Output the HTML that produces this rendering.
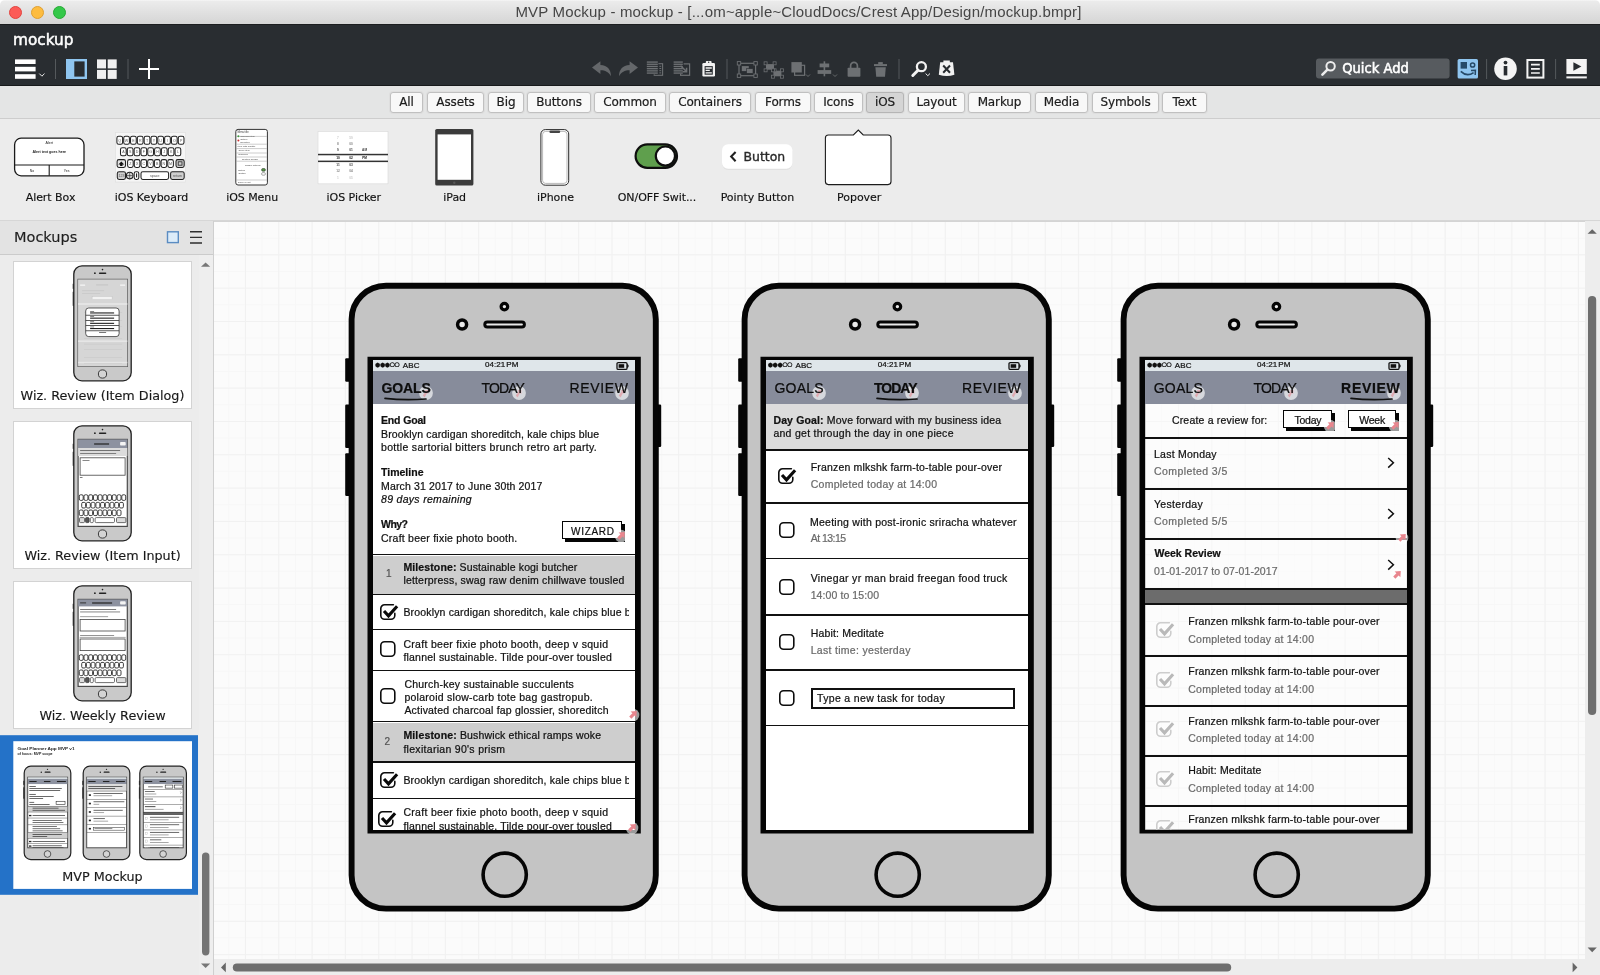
<!DOCTYPE html>
<html><head><meta charset="utf-8"><title>MVP Mockup - mockup</title>
<style>
*{box-sizing:border-box;margin:0;padding:0}
html,body{width:1600px;height:975px;overflow:hidden;background:#ececec;font-family:"DejaVu Sans","Liberation Sans",sans-serif;color:#222}
.abs{position:absolute}
#titlebar,#dark,#cats,#lib,#left,#canvas{will-change:transform}
.t{position:absolute;white-space:nowrap;font-family:"Liberation Sans",sans-serif;color:#111;-webkit-text-stroke:.22px currentColor}
.ar{font-family:"Liberation Sans",sans-serif}
#tbg{position:absolute;left:0;top:0;width:1600px;height:10px;background:#fff}
#titlebar{position:absolute;left:0;top:0;width:1600px;height:24px;background:linear-gradient(#f6f6f6 0,#ebebeb 1.5px,#d5d5d5 100%);border-radius:5px 5px 0 0}
#titlebar .tt{position:absolute;left:0;width:1597px;top:3px;text-align:center;font-family:"Liberation Sans",sans-serif;font-size:15px;line-height:18px;color:#454545;letter-spacing:.175px}
.tl{position:absolute;top:5.5px;width:13px;height:13px;border-radius:50%}
#dark{position:absolute;left:0;top:24px;width:1600px;height:62px;background:#292d31;box-shadow:inset 0 1px 0 #1c1e20,inset 0 -1px 0 #17191b}
#dark .name{position:absolute;left:13px;top:6.5px;color:#fff;font-size:15.3px;line-height:19px;-webkit-text-stroke:.5px #fff}
#cats{position:absolute;left:0;top:86px;width:1600px;height:33px;background:#e4e5e5;border-bottom:1px solid #cdcdcd}
.cb{position:absolute;top:6px;height:21px;border:1px solid #c0c0c0;border-radius:3px;background:#f8f8f8;font-size:12px;line-height:19px;text-align:center;color:#1c1c1c;box-shadow:0 0 0 1px #dedede;letter-spacing:-.12px;-webkit-text-stroke:.2px #1c1c1c}
.cb.sel{background:#d5d5d5;border-color:#b5b5b5}
#lib{position:absolute;left:0;top:119px;width:1600px;height:102px;background:#ececec;border-bottom:1px solid #d6d6d6}
.ll{position:absolute;top:72.4px;font-size:11px;line-height:14px;color:#111;-webkit-text-stroke:.15px #111;letter-spacing:-.05px;text-align:center;width:120px;white-space:nowrap}
#left{position:absolute;left:0;top:221px;width:214px;height:754px;background:#ececec;border-right:1px solid #cfcfcf}
#lhead{position:absolute;left:0;top:0;width:213px;height:34px;background:#e3e3e3;border-bottom:1px solid #cbcbcb}
#lhead .lt{position:absolute;left:14px;top:6.5px;font-size:14.5px;line-height:19px;color:#1e1e1e;-webkit-text-stroke:.15px #1e1e1e}
.thumb{position:absolute;left:13px;width:179px;height:148px;background:#fff;border:1px solid #d3d3d3}
.lab{position:absolute;width:200px;text-align:center;font-size:12.75px;line-height:16px;color:#1a1a1a;-webkit-text-stroke:.15px #1a1a1a;white-space:nowrap}
#cbg{position:absolute;left:214px;top:221px;width:1371px;height:738px;background-color:#fbfbfb;
background-image:linear-gradient(#f1f1f1 1px,transparent 1px),linear-gradient(90deg,#f1f1f1 1px,transparent 1px),linear-gradient(#f7f7f7 1px,transparent 1px),linear-gradient(90deg,#f7f7f7 1px,transparent 1px);
background-size:33.33px 33.33px,33.33px 33.33px,16.665px 16.665px,16.665px 16.665px;background-position:-2.4px 0px;box-shadow:inset 0 1px 0 #d4d4d4}
#canvas{position:absolute;left:0;top:0;width:1600px;height:975px}
</style></head><body>
<div id="tbg"></div>
<div id="titlebar">
 <div class="tl" style="left:9px;background:#fc5b57;border:.5px solid #e2443f"></div>
 <div class="tl" style="left:31.3px;background:#fdbc40;border:.5px solid #e0a030"></div>
 <div class="tl" style="left:53.4px;background:#34c84a;border:.5px solid #27aa35"></div>
 <div class="tt">MVP Mockup - mockup - [...om~apple~CloudDocs/Crest App/Design/mockup.bmpr]</div>
</div>
<div id="dark"><div class="name">mockup</div>
<svg class="abs" style="left:0;top:0" width="1600" height="62" viewBox="0 24 1600 62"><rect x="15" y="59.4" width="20.6" height="4.6" fill="#fff"/><rect x="15" y="66.8" width="20.6" height="4.6" fill="#fff"/><rect x="15" y="74.2" width="20.6" height="4.6" fill="#fff"/><path d="M39.3 73.6 L41.9 76.2 L44.5 73.6" fill="none" stroke="#e8e8e8" stroke-width="1"/><rect x="55.0" y="59" width="1" height="20" fill="#55595c"/><rect x="127.5" y="59" width="1" height="20" fill="#55595c"/><rect x="726.5" y="59" width="1" height="20" fill="#55595c"/><rect x="898.5" y="59" width="1" height="20" fill="#55595c"/><rect x="1486.1" y="59" width="1" height="20" fill="#55595c"/><rect x="1555.1" y="59" width="1" height="20" fill="#55595c"/><rect x="66" y="59" width="21" height="20" fill="#8fc5ef"/><rect x="74.3" y="61.4" width="10.3" height="15.2" fill="#282c30"/><rect x="97.0" y="59.4" width="9" height="9" fill="#f0f0f0"/><rect x="107.7" y="59.4" width="9" height="9" fill="#f0f0f0"/><rect x="97.0" y="69.9" width="9" height="9" fill="#f0f0f0"/><rect x="107.7" y="69.9" width="9" height="9" fill="#f0f0f0"/><path d="M139 69 H159 M149 59 V79" stroke="#fff" stroke-width="2" fill="none"/><g transform="translate(0 .7)"><path d="M592 66.8 L600.4 60.6 L600.4 64.2 C607.5 64.4 611 69 611 75.6 C608.6 71.4 605.4 69.6 600.4 69.6 L600.4 73.2 Z" fill="#64676a"/><path d="M638 66.8 L629.6 60.6 L629.6 64.2 C622.5 64.4 619 69 619 75.6 C621.4 71.4 624.6 69.6 629.6 69.6 L629.6 73.2 Z" fill="#64676a"/><rect x="654.2" y="63" width="8.4" height="11.6" fill="none" stroke="#6d7073" stroke-width="1.1"/><path d="M659.4 65.6h1.8M659.4 67.8h1.8M659.4 70h1.8M659.4 72.2h1.8" stroke="#6d7073" stroke-width="1"/><rect x="646" y="60" width="12.4" height="13.6" fill="#282c30"/><rect x="646.8" y="60.7" width="11" height="1.35" fill="#6d7073"/><rect x="646.8" y="62.9" width="11" height="1.35" fill="#6d7073"/><rect x="646.8" y="65.1" width="11" height="1.35" fill="#6d7073"/><rect x="646.8" y="67.3" width="11" height="1.35" fill="#6d7073"/><rect x="646.8" y="69.5" width="11" height="1.35" fill="#6d7073"/><rect x="646.8" y="71.7" width="11" height="1.35" fill="#6d7073"/><rect x="680.6" y="63.2" width="9" height="11.4" fill="none" stroke="#6d7073" stroke-width="1.2"/><rect x="673" y="60" width="10.6" height="13" fill="#282c30"/><rect x="673.6" y="60.7" width="9.2" height="1.35" fill="#6d7073"/><rect x="673.6" y="62.9" width="9.2" height="1.35" fill="#6d7073"/><rect x="673.6" y="65.1" width="9.2" height="1.35" fill="#6d7073"/><rect x="673.6" y="67.3" width="9.2" height="1.35" fill="#6d7073"/><rect x="673.6" y="69.5" width="9.2" height="1.35" fill="#6d7073"/><rect x="673.6" y="71.7" width="9.2" height="1.35" fill="#6d7073"/><path d="M680.6 65 L686.2 70.6 M682.6 71 H686.6 V67" fill="none" stroke="#6d7073" stroke-width="1.5"/><rect x="702.4" y="62.4" width="12.6" height="13.4" rx="1.2" fill="#f2f2f2"/><rect x="705.8" y="60.4" width="5.8" height="3.4" rx=".9" fill="#f2f2f2"/><circle cx="708.7" cy="61.6" r=".7" fill="#282c30"/><rect x="704.6" y="65.4" width="8.2" height="8.6" fill="#282c30"/><path d="M705.6 67.3h6.2M705.6 69.7h4.2M705.6 72.1h6.2" stroke="#f2f2f2" stroke-width="1.3"/><g fill="none" stroke="#6d7073"><rect x="739" y="62.6" width="16.6" height="12.4" stroke-width="1.2"/><rect x="741.8" y="65.4" width="7" height="5" fill="#6d7073" stroke="none"/><rect x="746.6" y="68" width="6.4" height="4.6" fill="#6d7073" stroke="#282c30" stroke-width=".6"/></g><rect x="737.3" y="60.9" width="3.4" height="3.4" fill="#282c30" stroke="#6d7073" stroke-width=".9"/><rect x="753.9" y="60.9" width="3.4" height="3.4" fill="#282c30" stroke="#6d7073" stroke-width=".9"/><rect x="737.3" y="73.3" width="3.4" height="3.4" fill="#282c30" stroke="#6d7073" stroke-width=".9"/><rect x="753.9" y="73.3" width="3.4" height="3.4" fill="#282c30" stroke="#6d7073" stroke-width=".9"/><g fill="#6d7073"><rect x="766" y="63.4" width="8" height="5.6"/><rect x="773.4" y="70" width="8" height="5.6"/></g><rect x="764.1" y="61.1" width="3" height="3" fill="#282c30" stroke="#6d7073" stroke-width=".8"/><rect x="773.1" y="61.1" width="3" height="3" fill="#282c30" stroke="#6d7073" stroke-width=".8"/><rect x="764.1" y="68.1" width="3" height="3" fill="#282c30" stroke="#6d7073" stroke-width=".8"/><rect x="773.1" y="68.1" width="3" height="3" fill="#282c30" stroke="#6d7073" stroke-width=".8"/><rect x="771.5" y="68.1" width="3" height="3" fill="#282c30" stroke="#6d7073" stroke-width=".8"/><rect x="780.5" y="68.1" width="3" height="3" fill="#282c30" stroke="#6d7073" stroke-width=".8"/><rect x="771.5" y="74.5" width="3" height="3" fill="#282c30" stroke="#6d7073" stroke-width=".8"/><rect x="780.5" y="74.5" width="3" height="3" fill="#282c30" stroke="#6d7073" stroke-width=".8"/><rect x="794.6" y="64.6" width="10" height="10" fill="none" stroke="#6d7073" stroke-width="1.2"/><rect x="791.4" y="61.4" width="10.4" height="10.4" fill="#6d7073"/><path d="M806 73.8 L808 75.8 L810 73.8" fill="none" stroke="#6d7073" stroke-width=".9"/><g fill="#6d7073"><rect x="823.6" y="60.6" width="1.6" height="15"/><rect x="819.6" y="62.8" width="9.6" height="3.8"/><rect x="817.6" y="69.4" width="13.6" height="3.8"/></g><path d="M833 73.8 L835 75.8 L837 73.8" fill="none" stroke="#6d7073" stroke-width=".9"/><rect x="847.6" y="67" width="12.8" height="9" rx=".8" fill="#6d7073"/><path d="M850.6 67.4 V65 a3.4 3.4 0 0 1 6.8 0 V67.4" fill="none" stroke="#6d7073" stroke-width="1.7"/><path d="M875.4 66.6 H885.8 L885 76 H876.2 Z" fill="#6d7073"/><rect x="874" y="63.4" width="13" height="2" fill="#6d7073"/><rect x="878.2" y="61.4" width="4.6" height="2.4" fill="#6d7073"/><circle cx="921.4" cy="66" r="4.5" fill="none" stroke="#f2f2f2" stroke-width="2.3"/><path d="M918 69.6 L912.8 74.8" stroke="#f2f2f2" stroke-width="3" stroke-linecap="round"/><path d="M925.6 72.8 L927.8 75 L930 72.8" fill="none" stroke="#f2f2f2" stroke-width="1"/><path d="M940.2 61.6 H953 L954.4 74 Q947 76.4 938.8 74 Z" fill="#f2f2f2"/><rect x="943.4" y="59.8" width="6.4" height="3" fill="#f2f2f2"/><path d="M943.2 64.8 L950 72 M950 64.8 L943.2 72" stroke="#282c30" stroke-width="2"/></g><rect x="1316" y="58.4" width="133.6" height="20.2" rx="3" fill="#575b5f"/><circle cx="1330.6" cy="66.2" r="4.2" fill="none" stroke="#ededed" stroke-width="2"/><path d="M1327.4 69.6 L1322.4 74.6" stroke="#ededed" stroke-width="2.6" stroke-linecap="round"/><text x="1342.2" y="73" font-family="DejaVu Sans,Liberation Sans,sans-serif" font-size="13.6" fill="#fff" stroke="#fff" stroke-width=".55" textLength="66.6" lengthAdjust="spacingAndGlyphs">Quick Add</text><rect x="1457.6" y="59" width="20.4" height="19.6" rx="1.5" fill="#8fc5ef"/><rect x="1460.6" y="62" width="6.4" height="6.6" fill="#264a68"/><circle cx="1472.6" cy="65" r="2.1" fill="none" stroke="#264a68" stroke-width="1.5"/><path d="M1460.8 71.4 Q1467 77.4 1473.6 72.6" fill="none" stroke="#264a68" stroke-width="1.7"/><path d="M1471 70.6 L1475.4 70.4 L1475.2 75" fill="none" stroke="#264a68" stroke-width="1.5"/><circle cx="1505.5" cy="68.8" r="11.3" fill="#f4f4f4"/><circle cx="1505.5" cy="62.6" r="1.9" fill="#282c30"/><rect x="1503.7" y="66" width="3.6" height="9.4" fill="#282c30"/><rect x="1527.4" y="60" width="16" height="17.6" fill="none" stroke="#f4f4f4" stroke-width="2"/><path d="M1531 64.6h8.8M1531 68.8h8.8M1531 73h8.8" stroke="#f4f4f4" stroke-width="1.7"/><rect x="1566.4" y="59" width="20.4" height="15" fill="#f4f4f4"/><path d="M1573.4 62.2 L1581.4 66.5 L1573.4 70.8 Z" fill="#282c30"/><rect x="1566.4" y="76.4" width="20.4" height="2" fill="#f4f4f4"/></svg>

</div>
<div id="cats">
<div class="cb" style="left:390px;width:33px">All</div>
<div class="cb" style="left:427px;width:57px">Assets</div>
<div class="cb" style="left:488px;width:36px">Big</div>
<div class="cb" style="left:527px;width:64px">Buttons</div>
<div class="cb" style="left:594px;width:72px">Common</div>
<div class="cb" style="left:669px;width:82px">Containers</div>
<div class="cb" style="left:755px;width:56px">Forms</div>
<div class="cb" style="left:814px;width:49px">Icons</div>
<div class="cb sel" style="left:866px;width:38px">iOS</div>
<div class="cb" style="left:908px;width:57px">Layout</div>
<div class="cb" style="left:968px;width:63px">Markup</div>
<div class="cb" style="left:1035px;width:53px">Media</div>
<div class="cb" style="left:1092px;width:67px">Symbols</div>
<div class="cb" style="left:1162px;width:45px">Text</div>
</div>
<div id="lib">
<svg class="abs" style="left:0;top:0" width="1000" height="102" viewBox="0 119 1000 102" font-family="Liberation Sans,sans-serif"><rect x="14.6" y="138.2" width="69.4" height="37.6" rx="6.5" fill="#fff" stroke="#1a1a1a" stroke-width="1.3"/><path d="M14.6 165 H84 M49.2 165 V175.8" stroke="#1a1a1a" stroke-width="1.1" fill="none"/><text x="49.3" y="143.6" font-size="3.6" text-anchor="middle" fill="#222">Alert</text><text x="49.3" y="153.4" font-size="3.6" font-weight="bold" text-anchor="middle" fill="#222">Alert text goes here</text><text x="32" y="172" font-size="3.4" text-anchor="middle" fill="#222">No</text><text x="66.6" y="172" font-size="3.4" text-anchor="middle" fill="#222">Yes</text><rect x="115.6" y="132.6" width="70" height="49.4" fill="#f6f6f6" stroke="#dedede" stroke-width=".6"/><rect x="116.90" y="136.20" width="5.70" height="8.00" rx="1.8" fill="#fff" stroke="#222" stroke-width="1.05"/><text x="119.75" y="141.50" font-size="3.6" text-anchor="middle" fill="#555">Q</text><rect x="123.72" y="136.20" width="5.70" height="8.00" rx="1.8" fill="#fff" stroke="#222" stroke-width="1.05"/><text x="126.57" y="141.50" font-size="3.6" text-anchor="middle" fill="#555">W</text><rect x="130.54" y="136.20" width="5.70" height="8.00" rx="1.8" fill="#fff" stroke="#222" stroke-width="1.05"/><text x="133.39" y="141.50" font-size="3.6" text-anchor="middle" fill="#555">E</text><rect x="137.36" y="136.20" width="5.70" height="8.00" rx="1.8" fill="#fff" stroke="#222" stroke-width="1.05"/><text x="140.21" y="141.50" font-size="3.6" text-anchor="middle" fill="#555">R</text><rect x="144.18" y="136.20" width="5.70" height="8.00" rx="1.8" fill="#fff" stroke="#222" stroke-width="1.05"/><text x="147.03" y="141.50" font-size="3.6" text-anchor="middle" fill="#555">T</text><rect x="151.00" y="136.20" width="5.70" height="8.00" rx="1.8" fill="#fff" stroke="#222" stroke-width="1.05"/><text x="153.85" y="141.50" font-size="3.6" text-anchor="middle" fill="#555">Y</text><rect x="157.82" y="136.20" width="5.70" height="8.00" rx="1.8" fill="#fff" stroke="#222" stroke-width="1.05"/><text x="160.67" y="141.50" font-size="3.6" text-anchor="middle" fill="#555">U</text><rect x="164.64" y="136.20" width="5.70" height="8.00" rx="1.8" fill="#fff" stroke="#222" stroke-width="1.05"/><text x="167.49" y="141.50" font-size="3.6" text-anchor="middle" fill="#555">I</text><rect x="171.46" y="136.20" width="5.70" height="8.00" rx="1.8" fill="#fff" stroke="#222" stroke-width="1.05"/><text x="174.31" y="141.50" font-size="3.6" text-anchor="middle" fill="#555">O</text><rect x="178.28" y="136.20" width="5.70" height="8.00" rx="1.8" fill="#fff" stroke="#222" stroke-width="1.05"/><text x="181.13" y="141.50" font-size="3.6" text-anchor="middle" fill="#555">P</text><rect x="120.50" y="147.80" width="5.70" height="8.00" rx="1.8" fill="#fff" stroke="#222" stroke-width="1.05"/><text x="123.35" y="153.10" font-size="3.6" text-anchor="middle" fill="#555">A</text><rect x="127.32" y="147.80" width="5.70" height="8.00" rx="1.8" fill="#fff" stroke="#222" stroke-width="1.05"/><text x="130.17" y="153.10" font-size="3.6" text-anchor="middle" fill="#555">S</text><rect x="134.14" y="147.80" width="5.70" height="8.00" rx="1.8" fill="#fff" stroke="#222" stroke-width="1.05"/><text x="136.99" y="153.10" font-size="3.6" text-anchor="middle" fill="#555">D</text><rect x="140.96" y="147.80" width="5.70" height="8.00" rx="1.8" fill="#fff" stroke="#222" stroke-width="1.05"/><text x="143.81" y="153.10" font-size="3.6" text-anchor="middle" fill="#555">F</text><rect x="147.78" y="147.80" width="5.70" height="8.00" rx="1.8" fill="#fff" stroke="#222" stroke-width="1.05"/><text x="150.63" y="153.10" font-size="3.6" text-anchor="middle" fill="#555">G</text><rect x="154.60" y="147.80" width="5.70" height="8.00" rx="1.8" fill="#fff" stroke="#222" stroke-width="1.05"/><text x="157.45" y="153.10" font-size="3.6" text-anchor="middle" fill="#555">H</text><rect x="161.42" y="147.80" width="5.70" height="8.00" rx="1.8" fill="#fff" stroke="#222" stroke-width="1.05"/><text x="164.27" y="153.10" font-size="3.6" text-anchor="middle" fill="#555">J</text><rect x="168.24" y="147.80" width="5.70" height="8.00" rx="1.8" fill="#fff" stroke="#222" stroke-width="1.05"/><text x="171.09" y="153.10" font-size="3.6" text-anchor="middle" fill="#555">K</text><rect x="175.06" y="147.80" width="5.70" height="8.00" rx="1.8" fill="#fff" stroke="#222" stroke-width="1.05"/><text x="177.91" y="153.10" font-size="3.6" text-anchor="middle" fill="#555">L</text><rect x="117.10" y="159.60" width="8.40" height="7.80" rx="1.8" fill="#e4e4e4" stroke="#222" stroke-width="1.05"/><path d="M121.3 161.4 L124.2 164.4 H122.5 V166 H120.1 V164.4 H118.4 Z" fill="#111"/><rect x="127.60" y="159.60" width="5.60" height="7.80" rx="1.8" fill="#fff" stroke="#222" stroke-width="1.05"/><text x="130.40" y="164.80" font-size="3.6" text-anchor="middle" fill="#555">Z</text><rect x="134.30" y="159.60" width="5.60" height="7.80" rx="1.8" fill="#fff" stroke="#222" stroke-width="1.05"/><text x="137.10" y="164.80" font-size="3.6" text-anchor="middle" fill="#555">X</text><rect x="141.00" y="159.60" width="5.60" height="7.80" rx="1.8" fill="#fff" stroke="#222" stroke-width="1.05"/><text x="143.80" y="164.80" font-size="3.6" text-anchor="middle" fill="#555">C</text><rect x="147.70" y="159.60" width="5.60" height="7.80" rx="1.8" fill="#fff" stroke="#222" stroke-width="1.05"/><text x="150.50" y="164.80" font-size="3.6" text-anchor="middle" fill="#555">V</text><rect x="154.40" y="159.60" width="5.60" height="7.80" rx="1.8" fill="#fff" stroke="#222" stroke-width="1.05"/><text x="157.20" y="164.80" font-size="3.6" text-anchor="middle" fill="#555">B</text><rect x="161.10" y="159.60" width="5.60" height="7.80" rx="1.8" fill="#fff" stroke="#222" stroke-width="1.05"/><text x="163.90" y="164.80" font-size="3.6" text-anchor="middle" fill="#555">N</text><rect x="167.80" y="159.60" width="5.60" height="7.80" rx="1.8" fill="#fff" stroke="#222" stroke-width="1.05"/><text x="170.60" y="164.80" font-size="3.6" text-anchor="middle" fill="#555">M</text><rect x="176.00" y="159.60" width="8.20" height="7.80" rx="1.8" fill="#cfcfcf" stroke="#222" stroke-width="1.05"/><rect x="178.2" y="161.8" width="3.8" height="3.4" fill="none" stroke="#222" stroke-width=".8"/><rect x="117.30" y="171.80" width="8.20" height="7.60" rx="1.8" fill="#cfcfcf" stroke="#222" stroke-width="1.05"/><text x="121.40" y="176.90" font-size="3.6" text-anchor="middle" fill="#555">123</text><circle cx="129.7" cy="175.6" r="3.3" fill="#ddd" stroke="#222" stroke-width="1.1"/><path d="M126.8 175.6h5.8M129.7 172.6v6" stroke="#222" stroke-width=".6"/><rect x="134.20" y="171.80" width="4.60" height="7.60" rx="1.8" fill="#fff" stroke="#222" stroke-width="1.05"/><rect x="136" y="173.4" width="1.1" height="4" fill="#222"/><rect x="141.00" y="171.80" width="27.60" height="7.60" rx="1.8" fill="#fff" stroke="#222" stroke-width="1.05"/><text x="154.80" y="176.90" font-size="3.6" text-anchor="middle" fill="#555">space</text><rect x="170.60" y="171.80" width="13.60" height="7.60" rx="1.8" fill="#cfcfcf" stroke="#222" stroke-width="1.05"/><text x="177.40" y="176.90" font-size="3.6" text-anchor="middle" fill="#555">return</text><rect x="235.8" y="129.4" width="31.6" height="55.6" rx="2.2" fill="#fff" stroke="#333" stroke-width="1"/><text x="237.4" y="133.4" font-size="2.6" fill="#333">Menu title</text><path d="M236.4 136.4 H266.8" stroke="#9a9a9a" stroke-width=".5"/><path d="M236.4 144.2 H266.8" stroke="#9a9a9a" stroke-width=".5"/><path d="M236.4 148.6 H266.8" stroke="#9a9a9a" stroke-width=".5"/><path d="M236.4 153.0 H266.8" stroke="#9a9a9a" stroke-width=".5"/><path d="M236.4 157.0 H266.8" stroke="#9a9a9a" stroke-width=".5"/><path d="M236.4 161.2 H266.8" stroke="#9a9a9a" stroke-width=".5"/><path d="M236.4 180.0 H266.8" stroke="#9a9a9a" stroke-width=".5"/><circle cx="238.4" cy="136.2" r="1" fill="#3f9c3f"/><circle cx="238.4" cy="140.6" r="1" fill="#c33"/><text x="240.2" y="137.0" font-size="2.4" fill="#444">Checked item</text><text x="240.2" y="140.0" font-size="2.4" fill="#444">Option</text><text x="240.2" y="142.6" font-size="2.4" fill="#444">Selected</text><text x="237.6" y="146.8" font-size="2.4" fill="#444">Item with subtitle</text><text x="238.6" y="151.2" font-size="2.4" fill="#444">Open item</text><text x="238.6" y="155.4" font-size="2.4" fill="#444">Disabled</text><text x="242.0" y="159.6" font-size="2.4" fill="#444">Section header</text><text x="245.0" y="166.0" font-size="2.4" fill="#444">Toggle options</text><text x="238.0" y="170.6" font-size="2.4" fill="#444">Option</text><text x="238.6" y="174.4" font-size="2.4" fill="#444">Switch</text><text x="238.0" y="183.4" font-size="2.4" fill="#444">Done or not</text><rect x="261.6" y="168.6" width="3.8" height="2.6" rx="1.2" fill="#5a9c4a" stroke="#222" stroke-width=".5"/><rect x="261.6" y="172.6" width="3.8" height="2.6" rx="1.2" fill="#fff" stroke="#555" stroke-width=".5"/><rect x="318" y="131.4" width="70" height="52.4" fill="#fff" stroke="#dcdcdc" stroke-width=".7"/><rect x="318" y="153.8" width="70" height="1.5" fill="#333"/><rect x="318" y="160.6" width="70" height="1.5" fill="#333"/><text x="338" y="138.6" font-size="3.2" text-anchor="middle" fill="#ccc" font-weight="bold">7</text><text x="351" y="138.6" font-size="3.2" text-anchor="middle" fill="#ccc" font-weight="bold">59</text><text x="364.6" y="138.6" font-size="3.2" text-anchor="middle" fill="#ccc" font-weight="bold"></text><text x="338" y="144.6" font-size="3.2" text-anchor="middle" fill="#888" font-weight="bold">8</text><text x="351" y="144.6" font-size="3.2" text-anchor="middle" fill="#888" font-weight="bold">00</text><text x="364.6" y="144.6" font-size="3.2" text-anchor="middle" fill="#888" font-weight="bold"></text><text x="338" y="151.0" font-size="3.2" text-anchor="middle" fill="#444" font-weight="bold">9</text><text x="351" y="151.0" font-size="3.2" text-anchor="middle" fill="#444" font-weight="bold">01</text><text x="364.6" y="151.0" font-size="3.2" text-anchor="middle" fill="#444" font-weight="bold">AM</text><text x="338" y="158.8" font-size="3.2" text-anchor="middle" fill="#111" font-weight="bold">10</text><text x="351" y="158.8" font-size="3.2" text-anchor="middle" fill="#111" font-weight="bold">02</text><text x="364.6" y="158.8" font-size="3.2" text-anchor="middle" fill="#111" font-weight="bold">PM</text><text x="338" y="165.8" font-size="3.2" text-anchor="middle" fill="#444" font-weight="bold">11</text><text x="351" y="165.8" font-size="3.2" text-anchor="middle" fill="#444" font-weight="bold">03</text><text x="364.6" y="165.8" font-size="3.2" text-anchor="middle" fill="#444" font-weight="bold"></text><text x="338" y="172.4" font-size="3.2" text-anchor="middle" fill="#888" font-weight="bold">12</text><text x="351" y="172.4" font-size="3.2" text-anchor="middle" fill="#888" font-weight="bold">04</text><text x="364.6" y="172.4" font-size="3.2" text-anchor="middle" fill="#888" font-weight="bold"></text><text x="338" y="178.6" font-size="3.2" text-anchor="middle" fill="#ccc" font-weight="bold">1</text><text x="351" y="178.6" font-size="3.2" text-anchor="middle" fill="#ccc" font-weight="bold">05</text><text x="364.6" y="178.6" font-size="3.2" text-anchor="middle" fill="#ccc" font-weight="bold"></text><rect x="435.2" y="129" width="38.2" height="56.6" rx="1.6" fill="#3b3b3b"/><rect x="437.6" y="134.4" width="33.4" height="45.4" fill="#fff"/><circle cx="454.3" cy="182.8" r="1.2" fill="#555"/><rect x="540.9" y="129.6" width="27.8" height="55.6" rx="4.4" fill="#fff" stroke="#2a2a2a" stroke-width="1"/><rect x="542.6" y="131.4" width="24.4" height="52" rx="3" fill="#fff" stroke="#8a8a8a" stroke-width=".6"/><rect x="549.4" y="130.6" width="10.8" height="2.4" rx="1.2" fill="#444"/><rect x="635.6" y="144.4" width="41.4" height="23.4" rx="11.7" fill="#5f9f4d" stroke="#0e0e0e" stroke-width="2.2"/><circle cx="665.4" cy="156.1" r="9.6" fill="#fff" stroke="#0e0e0e" stroke-width="2.2"/><rect x="722.2" y="145" width="70" height="25" rx="6" fill="#d9d9d9" opacity=".55"/><rect x="722" y="144.2" width="70.4" height="24.6" rx="6" fill="#fff"/><path d="M735.6 152 L731.2 156.6 L735.6 161.2" fill="none" stroke="#222" stroke-width="2.1"/><text x="743.6" y="161.2" font-family="DejaVu Sans,Liberation Sans,sans-serif" font-size="12" fill="#2a2a2a" stroke="#2a2a2a" stroke-width=".35" textLength="41.6" lengthAdjust="spacingAndGlyphs">Button</text><path d="M828.4 135 H853.4 L858.3 130 L863.2 135 H888 Q891 135 891 138 V181.6 Q891 184.6 888 184.6 H828.4 Q825.4 184.6 825.4 181.6 V138 Q825.4 135 828.4 135 Z" fill="#fff" stroke="#1c1c1c" stroke-width="1.1"/></svg>
<div class="ll" style="left:-9.5px">Alert Box</div>
<div class="ll" style="left:91.5px">iOS Keyboard</div>
<div class="ll" style="left:192.2px">iOS Menu</div>
<div class="ll" style="left:293.8px">iOS Picker</div>
<div class="ll" style="left:394.7px">iPad</div>
<div class="ll" style="left:495.5px">iPhone</div>
<div class="ll" style="left:597.0px">ON/OFF Swit...</div>
<div class="ll" style="left:697.4px">Pointy Button</div>
<div class="ll" style="left:799.2px">Popover</div>

</div>
<div id="left"><div id="lhead"><div class="lt">Mockups</div></div>
<div class="thumb" style="top:40px"></div><div class="thumb" style="top:200px"></div><div class="thumb" style="top:360px"></div>
<svg class="abs" style="left:0;top:0" width="214" height="754" viewBox="0 221 214 754" font-family="Liberation Sans,sans-serif"><rect x="0" y="735.2" width="198" height="159.6" fill="#2472c8"/><rect x="13.3" y="741.2" width="178.7" height="147.7" fill="#fff"/><rect x="73.8" y="265.8" width="57.4" height="115.0" rx="8.2" fill="#c9c9c9" stroke="#222" stroke-width="1.32"/><rect x="72.7" y="283.8" width="1.2" height="5.0" fill="#2b2b2b"/><rect x="72.7" y="291.8" width="1.2" height="14.0" fill="#2b2b2b"/><rect x="78.1" y="279.4" width="49.2" height="87.0" fill="#d6d6d6" stroke="#4a4a4a" stroke-width="1.20"/><circle cx="102.5" cy="269.6" r="0.80" fill="#222"/><circle cx="94.9" cy="273.2" r="0.90" fill="#222"/><rect x="98.9" y="272.4" width="7.4" height="1.5" rx="0.7" fill="#222"/><circle cx="102.5" cy="374.0" r="4.10" fill="#d4d4d4" stroke="#2b2b2b" stroke-width="0.90"/><g transform="translate(78.10 279.40) scale(1.0000)"><rect x="0" y="0" width="49.2" height="87" fill="#d6d6d6"/><rect x="2.0" y="5.0" width="5.0" height="1.6" fill="#eee"/><rect x="18.0" y="5.0" width="12.0" height="1.0" fill="#c4c4c4"/><rect x="42.0" y="5.0" width="5.0" height="1.6" fill="#eee"/><rect x="4.0" y="11.0" width="22.0" height="0.7" fill="#c6c6c6"/><rect x="4.0" y="13.6" width="18.0" height="0.7" fill="#c6c6c6"/><rect x="14" y="17" width="20" height="3.4" fill="#f2f2f2" stroke="#bbb" stroke-width=".4"/><rect x="0.0" y="23.6" width="49.2" height="2.0" fill="#e4e4e4"/><rect x="6.0" y="33.0" width="38.0" height="0.6" fill="#c8c8c8"/><rect x="6.0" y="41.0" width="38.0" height="0.6" fill="#c8c8c8"/><rect x="6.0" y="47.0" width="38.0" height="0.6" fill="#c8c8c8"/><rect x="6.0" y="59.0" width="38.0" height="0.6" fill="#c8c8c8"/><rect x="6.0" y="64.4" width="38.0" height="0.6" fill="#c8c8c8"/><rect x="6.0" y="70.0" width="38.0" height="0.6" fill="#c8c8c8"/><rect x="6.0" y="78.0" width="38.0" height="0.6" fill="#c8c8c8"/><rect x="6.0" y="84.0" width="38.0" height="0.6" fill="#c8c8c8"/><rect x="0.0" y="61.0" width="49.2" height="1.6" fill="#e6e6e6"/><rect x="0.0" y="82.4" width="49.2" height="1.4" fill="#e6e6e6"/><rect x="7.6" y="28.6" width="33.4" height="28.6" rx="3" fill="#fff" stroke="#333" stroke-width=".8"/><rect x="7.6" y="35.4" width="33.4" height="0.8" fill="#333"/><rect x="12.0" y="33.0" width="24.0" height="1.1" fill="#222"/><rect x="12.0" y="31.6" width="4.0" height="0.7" fill="#555"/><rect x="7.6" y="40.6" width="33.4" height="0.8" fill="#333"/><rect x="12.0" y="38.2" width="24.0" height="1.1" fill="#222"/><rect x="12.0" y="36.8" width="4.0" height="0.7" fill="#555"/><rect x="7.6" y="45.8" width="33.4" height="0.8" fill="#333"/><rect x="12.0" y="43.4" width="24.0" height="1.1" fill="#222"/><rect x="12.0" y="42.0" width="4.0" height="0.7" fill="#555"/><rect x="7.6" y="51.0" width="33.4" height="0.8" fill="#333"/><rect x="12.0" y="48.6" width="24.0" height="1.1" fill="#222"/><rect x="12.0" y="47.2" width="4.0" height="0.7" fill="#555"/><rect x="21.0" y="52.6" width="7.0" height="0.8" fill="#555"/></g><rect x="73.8" y="425.8" width="57.4" height="115.0" rx="8.2" fill="#c9c9c9" stroke="#222" stroke-width="1.32"/><rect x="72.7" y="443.8" width="1.2" height="5.0" fill="#2b2b2b"/><rect x="72.7" y="451.8" width="1.2" height="14.0" fill="#2b2b2b"/><rect x="78.1" y="439.4" width="49.2" height="87.0" fill="#fff" stroke="#4a4a4a" stroke-width="1.20"/><circle cx="102.5" cy="429.6" r="0.80" fill="#222"/><circle cx="94.9" cy="433.2" r="0.90" fill="#222"/><rect x="98.9" y="432.4" width="7.4" height="1.5" rx="0.7" fill="#222"/><circle cx="102.5" cy="534.0" r="4.10" fill="#d4d4d4" stroke="#2b2b2b" stroke-width="0.90"/><g transform="translate(78.10 439.40) scale(1.0000)"><rect x="0" y="0" width="49.2" height="8.6" fill="#8d92a0"/><rect x="16.0" y="4.0" width="15.0" height="1.2" fill="#222"/><rect x="42" y="2.6" width="5.6" height="3.6" rx=".8" fill="#f4f4f4"/><rect x="0" y="8.6" width="49.2" height="8" fill="#dcdcdc"/><rect x="2.0" y="10.8" width="40.0" height="0.7" fill="#444"/><rect x="2.0" y="13.6" width="36.0" height="0.7" fill="#555"/><rect x="2" y="18.4" width="45" height="17.4" fill="#fff" stroke="#444" stroke-width=".8"/><rect x="4.4" y="20.6" width="7.0" height="0.7" fill="#555"/><rect x="1.8" y="37.6" width="2.6" height="0.7" fill="#444"/><rect x="1.2" y="55.4" width="3.9" height="5.6" rx="1.3" fill="#fff" stroke="#1e1e1e" stroke-width=".85"/><rect x="5.9" y="55.4" width="3.9" height="5.6" rx="1.3" fill="#fff" stroke="#1e1e1e" stroke-width=".85"/><rect x="10.6" y="55.4" width="3.9" height="5.6" rx="1.3" fill="#fff" stroke="#1e1e1e" stroke-width=".85"/><rect x="15.4" y="55.4" width="3.9" height="5.6" rx="1.3" fill="#fff" stroke="#1e1e1e" stroke-width=".85"/><rect x="20.1" y="55.4" width="3.9" height="5.6" rx="1.3" fill="#fff" stroke="#1e1e1e" stroke-width=".85"/><rect x="24.8" y="55.4" width="3.9" height="5.6" rx="1.3" fill="#fff" stroke="#1e1e1e" stroke-width=".85"/><rect x="29.5" y="55.4" width="3.9" height="5.6" rx="1.3" fill="#fff" stroke="#1e1e1e" stroke-width=".85"/><rect x="34.2" y="55.4" width="3.9" height="5.6" rx="1.3" fill="#fff" stroke="#1e1e1e" stroke-width=".85"/><rect x="39.0" y="55.4" width="3.9" height="5.6" rx="1.3" fill="#fff" stroke="#1e1e1e" stroke-width=".85"/><rect x="43.7" y="55.4" width="3.9" height="5.6" rx="1.3" fill="#fff" stroke="#1e1e1e" stroke-width=".85"/><rect x="3.6" y="63.0" width="3.9" height="5.6" rx="1.3" fill="#fff" stroke="#1e1e1e" stroke-width=".85"/><rect x="8.3" y="63.0" width="3.9" height="5.6" rx="1.3" fill="#fff" stroke="#1e1e1e" stroke-width=".85"/><rect x="13.0" y="63.0" width="3.9" height="5.6" rx="1.3" fill="#fff" stroke="#1e1e1e" stroke-width=".85"/><rect x="17.8" y="63.0" width="3.9" height="5.6" rx="1.3" fill="#fff" stroke="#1e1e1e" stroke-width=".85"/><rect x="22.5" y="63.0" width="3.9" height="5.6" rx="1.3" fill="#fff" stroke="#1e1e1e" stroke-width=".85"/><rect x="27.2" y="63.0" width="3.9" height="5.6" rx="1.3" fill="#fff" stroke="#1e1e1e" stroke-width=".85"/><rect x="31.9" y="63.0" width="3.9" height="5.6" rx="1.3" fill="#fff" stroke="#1e1e1e" stroke-width=".85"/><rect x="36.6" y="63.0" width="3.9" height="5.6" rx="1.3" fill="#fff" stroke="#1e1e1e" stroke-width=".85"/><rect x="41.4" y="63.0" width="3.9" height="5.6" rx="1.3" fill="#fff" stroke="#1e1e1e" stroke-width=".85"/><rect x="1.2" y="70.6" width="3.9" height="5.6" rx="1.3" fill="#fff" stroke="#1e1e1e" stroke-width=".85"/><rect x="5.9" y="70.6" width="3.9" height="5.6" rx="1.3" fill="#fff" stroke="#1e1e1e" stroke-width=".85"/><rect x="10.6" y="70.6" width="3.9" height="5.6" rx="1.3" fill="#fff" stroke="#1e1e1e" stroke-width=".85"/><rect x="15.4" y="70.6" width="3.9" height="5.6" rx="1.3" fill="#fff" stroke="#1e1e1e" stroke-width=".85"/><rect x="20.1" y="70.6" width="3.9" height="5.6" rx="1.3" fill="#fff" stroke="#1e1e1e" stroke-width=".85"/><rect x="24.8" y="70.6" width="3.9" height="5.6" rx="1.3" fill="#fff" stroke="#1e1e1e" stroke-width=".85"/><rect x="29.5" y="70.6" width="3.9" height="5.6" rx="1.3" fill="#fff" stroke="#1e1e1e" stroke-width=".85"/><rect x="34.2" y="70.6" width="3.9" height="5.6" rx="1.3" fill="#fff" stroke="#1e1e1e" stroke-width=".85"/><rect x="39.0" y="70.6" width="3.9" height="5.6" rx="1.3" fill="#fff" stroke="#1e1e1e" stroke-width=".85"/><rect x="1.4" y="78.2" width="5" height="5" rx="1" fill="#ddd" stroke="#333" stroke-width=".7"/><rect x="7.4" y="78.2" width="3.6" height="5" rx="1" fill="#555" stroke="#333" stroke-width=".7"/><rect x="12.2" y="78.2" width="3" height="5" rx="1" fill="#fff" stroke="#333" stroke-width=".7"/><rect x="17" y="78.2" width="19.4" height="5" rx="1.2" fill="#fff" stroke="#333" stroke-width=".7"/><rect x="38.4" y="78.2" width="9.4" height="5" rx="1" fill="#ddd" stroke="#333" stroke-width=".7"/></g><rect x="73.8" y="585.8" width="57.4" height="115.0" rx="8.2" fill="#c9c9c9" stroke="#222" stroke-width="1.32"/><rect x="72.7" y="603.8" width="1.2" height="5.0" fill="#2b2b2b"/><rect x="72.7" y="611.8" width="1.2" height="14.0" fill="#2b2b2b"/><rect x="78.1" y="599.4" width="49.2" height="87.0" fill="#fff" stroke="#4a4a4a" stroke-width="1.20"/><circle cx="102.5" cy="589.6" r="0.80" fill="#222"/><circle cx="94.9" cy="593.2" r="0.90" fill="#222"/><rect x="98.9" y="592.4" width="7.4" height="1.5" rx="0.7" fill="#222"/><circle cx="102.5" cy="694.0" r="4.10" fill="#d4d4d4" stroke="#2b2b2b" stroke-width="0.90"/><g transform="translate(78.10 599.40) scale(1.0000)"><rect x="0" y="0" width="49.2" height="7" fill="#8d92a0"/><rect x="2.0" y="3.0" width="6.0" height="1.0" fill="#333"/><rect x="14.0" y="3.0" width="20.0" height="1.2" fill="#222"/><rect x="42" y="1.8" width="5.6" height="3.4" rx=".8" fill="#f4f4f4"/><rect x="2.0" y="9.6" width="36.0" height="0.7" fill="#444"/><rect x="2.0" y="12.2" width="40.0" height="0.7" fill="#555"/><rect x="2.0" y="17.0" width="28.0" height="0.7" fill="#777"/><rect x="2" y="20" width="45" height="11.6" fill="#fff" stroke="#444" stroke-width=".8"/><rect x="2.0" y="35.6" width="34.0" height="0.7" fill="#666"/><path d="M1.6 38 H47.6" stroke="#555" stroke-width=".5"/><rect x="2" y="39.6" width="45" height="11.6" fill="#fff" stroke="#444" stroke-width=".8"/><rect x="1.2" y="55.4" width="3.9" height="5.6" rx="1.3" fill="#fff" stroke="#1e1e1e" stroke-width=".85"/><rect x="5.9" y="55.4" width="3.9" height="5.6" rx="1.3" fill="#fff" stroke="#1e1e1e" stroke-width=".85"/><rect x="10.6" y="55.4" width="3.9" height="5.6" rx="1.3" fill="#fff" stroke="#1e1e1e" stroke-width=".85"/><rect x="15.4" y="55.4" width="3.9" height="5.6" rx="1.3" fill="#fff" stroke="#1e1e1e" stroke-width=".85"/><rect x="20.1" y="55.4" width="3.9" height="5.6" rx="1.3" fill="#fff" stroke="#1e1e1e" stroke-width=".85"/><rect x="24.8" y="55.4" width="3.9" height="5.6" rx="1.3" fill="#fff" stroke="#1e1e1e" stroke-width=".85"/><rect x="29.5" y="55.4" width="3.9" height="5.6" rx="1.3" fill="#fff" stroke="#1e1e1e" stroke-width=".85"/><rect x="34.2" y="55.4" width="3.9" height="5.6" rx="1.3" fill="#fff" stroke="#1e1e1e" stroke-width=".85"/><rect x="39.0" y="55.4" width="3.9" height="5.6" rx="1.3" fill="#fff" stroke="#1e1e1e" stroke-width=".85"/><rect x="43.7" y="55.4" width="3.9" height="5.6" rx="1.3" fill="#fff" stroke="#1e1e1e" stroke-width=".85"/><rect x="3.6" y="63.0" width="3.9" height="5.6" rx="1.3" fill="#fff" stroke="#1e1e1e" stroke-width=".85"/><rect x="8.3" y="63.0" width="3.9" height="5.6" rx="1.3" fill="#fff" stroke="#1e1e1e" stroke-width=".85"/><rect x="13.0" y="63.0" width="3.9" height="5.6" rx="1.3" fill="#fff" stroke="#1e1e1e" stroke-width=".85"/><rect x="17.8" y="63.0" width="3.9" height="5.6" rx="1.3" fill="#fff" stroke="#1e1e1e" stroke-width=".85"/><rect x="22.5" y="63.0" width="3.9" height="5.6" rx="1.3" fill="#fff" stroke="#1e1e1e" stroke-width=".85"/><rect x="27.2" y="63.0" width="3.9" height="5.6" rx="1.3" fill="#fff" stroke="#1e1e1e" stroke-width=".85"/><rect x="31.9" y="63.0" width="3.9" height="5.6" rx="1.3" fill="#fff" stroke="#1e1e1e" stroke-width=".85"/><rect x="36.6" y="63.0" width="3.9" height="5.6" rx="1.3" fill="#fff" stroke="#1e1e1e" stroke-width=".85"/><rect x="41.4" y="63.0" width="3.9" height="5.6" rx="1.3" fill="#fff" stroke="#1e1e1e" stroke-width=".85"/><rect x="1.2" y="70.6" width="3.9" height="5.6" rx="1.3" fill="#fff" stroke="#1e1e1e" stroke-width=".85"/><rect x="5.9" y="70.6" width="3.9" height="5.6" rx="1.3" fill="#fff" stroke="#1e1e1e" stroke-width=".85"/><rect x="10.6" y="70.6" width="3.9" height="5.6" rx="1.3" fill="#fff" stroke="#1e1e1e" stroke-width=".85"/><rect x="15.4" y="70.6" width="3.9" height="5.6" rx="1.3" fill="#fff" stroke="#1e1e1e" stroke-width=".85"/><rect x="20.1" y="70.6" width="3.9" height="5.6" rx="1.3" fill="#fff" stroke="#1e1e1e" stroke-width=".85"/><rect x="24.8" y="70.6" width="3.9" height="5.6" rx="1.3" fill="#fff" stroke="#1e1e1e" stroke-width=".85"/><rect x="29.5" y="70.6" width="3.9" height="5.6" rx="1.3" fill="#fff" stroke="#1e1e1e" stroke-width=".85"/><rect x="34.2" y="70.6" width="3.9" height="5.6" rx="1.3" fill="#fff" stroke="#1e1e1e" stroke-width=".85"/><rect x="39.0" y="70.6" width="3.9" height="5.6" rx="1.3" fill="#fff" stroke="#1e1e1e" stroke-width=".85"/><rect x="1.4" y="78.2" width="5" height="5" rx="1" fill="#ddd" stroke="#333" stroke-width=".7"/><rect x="7.4" y="78.2" width="3.6" height="5" rx="1" fill="#555" stroke="#333" stroke-width=".7"/><rect x="12.2" y="78.2" width="3" height="5" rx="1" fill="#fff" stroke="#333" stroke-width=".7"/><rect x="17" y="78.2" width="19.4" height="5" rx="1.2" fill="#fff" stroke="#333" stroke-width=".7"/><rect x="38.4" y="78.2" width="9.4" height="5" rx="1" fill="#ddd" stroke="#333" stroke-width=".7"/></g><clipPath id="mc"><rect x="0" y="0" width="49.2" height="87"/></clipPath><rect x="24.2" y="766.2" width="46.6" height="93.4" rx="6.7" fill="#c9c9c9" stroke="#222" stroke-width="1.20"/><rect x="23.3" y="780.8" width="1.2" height="4.1" fill="#2b2b2b"/><rect x="23.3" y="787.3" width="1.2" height="11.4" fill="#2b2b2b"/><rect x="27.7" y="777.2" width="39.9" height="70.6" fill="#fff" stroke="#4a4a4a" stroke-width="0.97"/><circle cx="47.5" cy="769.3" r="0.65" fill="#222"/><circle cx="41.3" cy="772.2" r="0.73" fill="#222"/><rect x="44.6" y="771.6" width="6.0" height="1.2" rx="0.6" fill="#222"/><circle cx="47.5" cy="854.0" r="3.33" fill="#d4d4d4" stroke="#2b2b2b" stroke-width="0.73"/><g transform="translate(27.69 777.24) scale(0.8118)"><g clip-path="url(#mc)"><rect x="0" y="0" width="49.2" height="2" fill="#e0e6ea"/><rect x="0" y="2" width="49.2" height="6.4" fill="#8d92a0"/><rect x="2.0" y="4.6" width="9.0" height="1.3" fill="#222"/><rect x="20.0" y="4.6" width="8.0" height="1.3" fill="#222"/><rect x="36.0" y="4.6" width="11.0" height="1.3" fill="#222"/><rect x="2.0" y="11.0" width="8.0" height="0.9" fill="#333"/><rect x="2.0" y="13.6" width="40.0" height="0.9" fill="#333"/><rect x="2.0" y="16.0" width="38.0" height="0.9" fill="#333"/><rect x="2.0" y="20.6" width="8.0" height="0.9" fill="#333"/><rect x="2.0" y="23.2" width="30.0" height="0.9" fill="#333"/><rect x="2.0" y="25.6" width="17.0" height="0.9" fill="#333"/><rect x="2.0" y="30.4" width="6.0" height="0.9" fill="#333"/><rect x="2.0" y="33.0" width="25.0" height="0.9" fill="#333"/><rect x="35" y="29.6" width="11" height="4" fill="#fff" stroke="#222" stroke-width=".7"/><rect x="0" y="35.6" width="49.2" height="7" fill="#cfcfcf"/><rect x="0.0" y="35.4" width="49.2" height="0.5" fill="#333"/><rect x="0.0" y="42.6" width="49.2" height="0.5" fill="#333"/><rect x="6.0" y="37.6" width="32.0" height="0.9" fill="#333"/><rect x="6.0" y="40.2" width="40.0" height="0.9" fill="#333"/><rect x="1.6" y="46.4" width="3.0" height="1.6" fill="#222"/><rect x="6.0" y="46.6" width="40.0" height="0.9" fill="#333"/><rect x="0.0" y="50.0" width="49.2" height="0.5" fill="#333"/><rect x="6.0" y="52.8" width="36.0" height="0.9" fill="#444"/><rect x="6.0" y="55.4" width="38.0" height="0.9" fill="#444"/><rect x="0.0" y="58.4" width="49.2" height="0.5" fill="#333"/><rect x="6.0" y="60.4" width="30.0" height="0.9" fill="#444"/><rect x="6.0" y="63.0" width="34.0" height="0.9" fill="#444"/><rect x="6.0" y="65.6" width="37.0" height="0.9" fill="#444"/><rect x="0" y="68" width="49.2" height="7" fill="#cfcfcf"/><rect x="0.0" y="67.8" width="49.2" height="0.5" fill="#333"/><rect x="0.0" y="75.0" width="49.2" height="0.5" fill="#333"/><rect x="6.0" y="70.0" width="36.0" height="0.9" fill="#333"/><rect x="6.0" y="72.6" width="18.0" height="0.9" fill="#333"/><rect x="1.6" y="78.4" width="3.0" height="1.6" fill="#222"/><rect x="6.0" y="78.6" width="40.0" height="0.9" fill="#333"/><rect x="0.0" y="81.6" width="49.2" height="0.5" fill="#333"/><rect x="1.6" y="84.0" width="3.0" height="1.6" fill="#222"/><rect x="6.0" y="84.0" width="36.0" height="0.9" fill="#333"/><rect x="6.0" y="86.0" width="38.0" height="0.8" fill="#333"/></g></g><rect x="83.2" y="766.2" width="46.6" height="93.4" rx="6.7" fill="#c9c9c9" stroke="#222" stroke-width="1.20"/><rect x="82.3" y="780.8" width="1.2" height="4.1" fill="#2b2b2b"/><rect x="82.3" y="787.3" width="1.2" height="11.4" fill="#2b2b2b"/><rect x="86.7" y="777.2" width="39.9" height="70.6" fill="#fff" stroke="#4a4a4a" stroke-width="0.97"/><circle cx="106.5" cy="769.3" r="0.65" fill="#222"/><circle cx="100.3" cy="772.2" r="0.73" fill="#222"/><rect x="103.6" y="771.6" width="6.0" height="1.2" rx="0.6" fill="#222"/><circle cx="106.5" cy="854.0" r="3.33" fill="#d4d4d4" stroke="#2b2b2b" stroke-width="0.73"/><g transform="translate(86.69 777.24) scale(0.8118)"><g clip-path="url(#mc)"><rect x="0" y="0" width="49.2" height="2" fill="#e0e6ea"/><rect x="0" y="2" width="49.2" height="6.4" fill="#8d92a0"/><rect x="2.0" y="4.6" width="9.0" height="1.3" fill="#222"/><rect x="20.0" y="4.6" width="8.0" height="1.3" fill="#222"/><rect x="36.0" y="4.6" width="11.0" height="1.3" fill="#222"/><rect x="0" y="8.4" width="49.2" height="8.4" fill="#dcdcdc"/><rect x="2.0" y="10.8" width="42.0" height="0.9" fill="#333"/><rect x="2.0" y="13.4" width="33.0" height="0.9" fill="#333"/><rect x="0.0" y="16.8" width="49.2" height="0.5" fill="#333"/><rect x="2.6" y="21.0" width="2.6" height="2.0" fill="#222"/><rect x="8.4" y="19.4" width="36.0" height="0.9" fill="#333"/><rect x="8.4" y="22.4" width="23.0" height="0.9" fill="#888"/><rect x="0.0" y="26.8" width="49.2" height="0.5" fill="#333"/><rect x="2.6" y="31.4" width="2.6" height="2.0" fill="#222"/><rect x="8.4" y="29.8" width="38.0" height="0.9" fill="#333"/><rect x="8.4" y="32.8" width="7.0" height="0.9" fill="#888"/><rect x="0.0" y="37.2" width="49.2" height="0.5" fill="#333"/><rect x="2.6" y="41.8" width="2.6" height="2.0" fill="#222"/><rect x="8.4" y="40.2" width="36.0" height="0.9" fill="#333"/><rect x="8.4" y="43.2" width="13.0" height="0.9" fill="#888"/><rect x="0.0" y="47.6" width="49.2" height="0.5" fill="#333"/><rect x="2.6" y="52.2" width="2.6" height="2.0" fill="#222"/><rect x="8.4" y="50.6" width="14.0" height="0.9" fill="#333"/><rect x="8.4" y="53.6" width="18.0" height="0.9" fill="#888"/><rect x="0.0" y="58.0" width="49.2" height="0.5" fill="#333"/><rect x="2.6" y="62.4" width="2.6" height="2.0" fill="#222"/><rect x="8.4" y="61.6" width="38" height="3.6" fill="#fff" stroke="#222" stroke-width=".6"/><rect x="9.6" y="63.0" width="22.0" height="0.8" fill="#555"/><rect x="0.0" y="68.0" width="49.2" height="0.5" fill="#333"/></g></g><rect x="139.8" y="766.2" width="46.6" height="93.4" rx="6.7" fill="#c9c9c9" stroke="#222" stroke-width="1.20"/><rect x="138.9" y="780.8" width="1.2" height="4.1" fill="#2b2b2b"/><rect x="138.9" y="787.3" width="1.2" height="11.4" fill="#2b2b2b"/><rect x="143.3" y="777.2" width="39.9" height="70.6" fill="#fff" stroke="#4a4a4a" stroke-width="0.97"/><circle cx="163.1" cy="769.3" r="0.65" fill="#222"/><circle cx="156.9" cy="772.2" r="0.73" fill="#222"/><rect x="160.2" y="771.6" width="6.0" height="1.2" rx="0.6" fill="#222"/><circle cx="163.1" cy="854.0" r="3.33" fill="#d4d4d4" stroke="#2b2b2b" stroke-width="0.73"/><g transform="translate(143.29 777.24) scale(0.8118)"><g clip-path="url(#mc)"><rect x="0" y="0" width="49.2" height="2" fill="#e0e6ea"/><rect x="0" y="2" width="49.2" height="6.4" fill="#8d92a0"/><rect x="2.0" y="4.6" width="9.0" height="1.3" fill="#222"/><rect x="20.0" y="4.6" width="8.0" height="1.3" fill="#222"/><rect x="36.0" y="4.6" width="11.0" height="1.3" fill="#222"/><rect x="6.0" y="11.4" width="18.0" height="0.9" fill="#333"/><rect x="27" y="9.6" width="9.4" height="3.8" fill="#fff" stroke="#222" stroke-width=".7"/><rect x="38.6" y="9.6" width="9.4" height="3.8" fill="#fff" stroke="#222" stroke-width=".7"/><rect x="0.0" y="14.6" width="49.2" height="0.5" fill="#333"/><rect x="2.0" y="17.0" width="12.0" height="0.9" fill="#444"/><rect x="2.0" y="20.2" width="14.0" height="0.9" fill="#888"/><rect x="0.0" y="24.0" width="49.2" height="0.5" fill="#333"/><path d="M45.6 17.6 l1.2 1.2 l-1.2 1.2" fill="none" stroke="#222" stroke-width=".5"/><rect x="2.0" y="26.4" width="10.0" height="0.9" fill="#444"/><rect x="2.0" y="29.6" width="14.0" height="0.9" fill="#888"/><rect x="0.0" y="33.4" width="49.2" height="0.5" fill="#333"/><path d="M45.6 27.0 l1.2 1.2 l-1.2 1.2" fill="none" stroke="#222" stroke-width=".5"/><rect x="2.0" y="35.8" width="13.0" height="1.0" fill="#222"/><rect x="2.0" y="39.0" width="23.0" height="0.9" fill="#888"/><rect x="0.0" y="42.8" width="49.2" height="0.5" fill="#333"/><path d="M45.6 36.4 l1.2 1.2 l-1.2 1.2" fill="none" stroke="#222" stroke-width=".5"/><rect x="0" y="43" width="49.2" height="3.2" fill="#666" stroke="#222" stroke-width=".5"/><rect x="2.4" y="49.4" width="3" height="2.8" fill="none" stroke="#bbb" stroke-width=".5"/><rect x="8.2" y="48.8" width="36.0" height="0.9" fill="#333"/><rect x="8.2" y="52.0" width="23.0" height="0.9" fill="#888"/><rect x="0.0" y="55.4" width="49.2" height="0.5" fill="#333"/><rect x="2.4" y="58.7" width="3" height="2.8" fill="none" stroke="#bbb" stroke-width=".5"/><rect x="8.2" y="58.1" width="36.0" height="0.9" fill="#333"/><rect x="8.2" y="61.3" width="23.0" height="0.9" fill="#888"/><rect x="0.0" y="64.7" width="49.2" height="0.5" fill="#333"/><rect x="2.4" y="68.0" width="3" height="2.8" fill="none" stroke="#bbb" stroke-width=".5"/><rect x="8.2" y="67.4" width="36.0" height="0.9" fill="#333"/><rect x="8.2" y="70.6" width="23.0" height="0.9" fill="#888"/><rect x="0.0" y="74.0" width="49.2" height="0.5" fill="#333"/><rect x="2.4" y="77.3" width="3" height="2.8" fill="none" stroke="#bbb" stroke-width=".5"/><rect x="8.2" y="76.7" width="14.0" height="0.9" fill="#333"/><rect x="8.2" y="79.9" width="23.0" height="0.9" fill="#888"/><rect x="0.0" y="83.3" width="49.2" height="0.5" fill="#333"/><rect x="2.4" y="86.6" width="3" height="2.8" fill="none" stroke="#bbb" stroke-width=".5"/><rect x="8.2" y="86.0" width="36.0" height="0.9" fill="#333"/></g></g><text x="17.6" y="750.2" font-size="3.9" font-weight="bold" fill="#222" textLength="57" lengthAdjust="spacingAndGlyphs">Goal Planner App MVP v1</text><text x="17.6" y="755.4" font-size="3.9" font-weight="bold" fill="#222" textLength="35" lengthAdjust="spacingAndGlyphs">of focus: MVP scope</text><rect x="167.5" y="231.8" width="10.8" height="10.8" fill="#dcecf9" stroke="#5a8cc2" stroke-width="1.4"/><path d="M190 231.8h12M190 237.4h12M190 243h12" stroke="#2e2e2e" stroke-width="1.4"/><rect x="199" y="255" width="14" height="720" fill="#eeeeee"/><path d="M201 266.8 L205.6 262.4 L210.2 266.8 Z" fill="#777"/><path d="M201 963.6 L205.6 968 L210.2 963.6 Z" fill="#777"/><rect x="202" y="852.4" width="7.4" height="103" rx="3.7" fill="#747474"/></svg>
<div class="lab" style="left:2.5px;top:167.2px">Wiz. Review (Item Dialog)</div>
<div class="lab" style="left:2.5px;top:327.2px">Wiz. Review (Item Input)</div>
<div class="lab" style="left:2.5px;top:487.2px">Wiz. Weekly Review</div>
<div class="lab" style="left:2.5px;top:648.0px">MVP Mockup</div>

</div>
<div id="cbg"></div>
<div id="canvas">
<svg class="abs" style="left:344.0px;top:278px;overflow:visible" width="322" height="640" viewBox="344 278 322 640"><rect x="345.2" y="358.3" width="5" height="23.5" rx="1.2" fill="#050505"/><rect x="345.2" y="404.5" width="5" height="43.5" rx="1.2" fill="#050505"/><rect x="345.2" y="453.2" width="5" height="42.8" rx="1.2" fill="#050505"/><rect x="656" y="404.5" width="5.2" height="42.5" rx="1.2" fill="#050505"/><path fill-rule="evenodd" d="M386 285.8 H622.4 A33.4 33.4 0 0 1 655.8 319.2 V875.2 A33.4 33.4 0 0 1 622.4 908.6 H386 A34.4 33.4 0 0 1 351.6 875.2 V319.2 A34.4 33.4 0 0 1 386 285.8 Z M370.5 358.5 V831.5 H638 V358.5 Z" fill="#c4c4c4" stroke="none"/><path d="M386 285.8 H622.4 A33.4 33.4 0 0 1 655.8 319.2 V875.2 A33.4 33.4 0 0 1 622.4 908.6 H386 A34.4 33.4 0 0 1 351.6 875.2 V319.2 A34.4 33.4 0 0 1 386 285.8 Z" fill="none" stroke="#050505" stroke-width="5.9"/><path fill-rule="evenodd" d="M367.5 356.8 H640.8 V833.4 H367.5 Z M373.3 360 V829.6 H634.9 V360 Z" fill="#050505"/><circle cx="504.4" cy="306.6" r="3.3" fill="#e9e9e9" stroke="#050505" stroke-width="3.2"/><circle cx="462.1" cy="324.5" r="4.5" fill="#e9e9e9" stroke="#050505" stroke-width="3.5"/><rect x="484.8" y="322" width="39.6" height="5" rx="2.5" fill="#e9e9e9" stroke="#050505" stroke-width="3"/><circle cx="504.7" cy="874.7" r="21.6" fill="#c4c4c4" stroke="#050505" stroke-width="3.6"/></svg>
<div class="abs" style="left:373.3px;top:360.0px;width:261.6px;height:11.0px;background:#dfe6ea;"></div>
<div class="t ar" style="left:374.6px;top:359px;font-size:8px;line-height:11px;letter-spacing:.1px"><span style="letter-spacing:-1.55px;font-size:10.5px;line-height:11px;vertical-align:-.4px">●●●○○</span>&nbsp; ABC</div>
<div class="t ar" style="left:485.0px;top:359px;font-size:8px;line-height:11px;letter-spacing:.05px;word-spacing:-1.2px">04:21 PM</div>
<svg class="abs" style="left:615.5px;top:360.5px" width="14" height="10"><rect x="1" y="1.6" width="10" height="6.8" rx="1.2" fill="none" stroke="#111" stroke-width="1.3"/><rect x="2.6" y="3.2" width="5.6" height="3.6" fill="#111"/><path d="M11.6 3.4 Q13 5 11.6 6.6 Z" fill="#111" stroke="#111" stroke-width=".8"/></svg>
<div class="abs" style="left:373.3px;top:371.0px;width:261.6px;height:33.2px;background:#878c9b;"></div>
<svg class="abs" style="left:418.4px;top:385.0px" width="16" height="16" viewBox="0 0 16 16"><circle cx="8" cy="8" r="6.9" fill="#fff" fill-opacity=".66"/><path d="M6.4 5.2 L10.4 5 L10.2 9 L9 7.9 L6.6 12.4 L4.8 10.6 L7.6 6.3 Z" fill="#e8868e" fill-opacity=".55"/></svg>
<svg class="abs" style="left:511.4px;top:385.0px" width="16" height="16" viewBox="0 0 16 16"><circle cx="8" cy="8" r="6.9" fill="#fff" fill-opacity=".66"/><path d="M6.4 5.2 L10.4 5 L10.2 9 L9 7.9 L6.6 12.4 L4.8 10.6 L7.6 6.3 Z" fill="#e8868e" fill-opacity=".55"/></svg>
<svg class="abs" style="left:614.4px;top:385.0px" width="16" height="16" viewBox="0 0 16 16"><circle cx="8" cy="8" r="6.9" fill="#fff" fill-opacity=".66"/><path d="M6.4 5.2 L10.4 5 L10.2 9 L9 7.9 L6.6 12.4 L4.8 10.6 L7.6 6.3 Z" fill="#e8868e" fill-opacity=".55"/></svg>
<div class="t" style="left:381.4px;top:379.95px;font-size:14px;line-height:16px;letter-spacing:-0.095px;font-weight:bold;font-family:'Liberation Sans',sans-serif;color:#0d0d0d;">GOALS</div>
<svg class="abs" style="left:383.5px;top:396px" width="44" height="6"><path d="M1 2.4 Q20 4.4 42 3" fill="none" stroke="#111" stroke-width="1.7" stroke-linecap="round"/></svg>
<div class="t" style="left:481.6px;top:379.95px;font-size:14px;line-height:16px;letter-spacing:-0.909px;font-family:'Liberation Sans',sans-serif;color:#0d0d0d;">TODAY</div>
<div class="t" style="left:569.4px;top:379.95px;font-size:14px;line-height:16px;letter-spacing:0.654px;font-family:'Liberation Sans',sans-serif;color:#0d0d0d;">REVIEW</div>
<div class="abs" style="left:373.3px;top:404.2px;width:261.6px;height:425.4px;background:#fff;"></div>
<div class="t" style="left:381.0px;top:414.46px;font-size:10.5px;line-height:12px;letter-spacing:-0.155px;font-weight:bold;">End Goal</div>
<div class="t" style="left:381.0px;top:427.86px;font-size:10.5px;line-height:12px;letter-spacing:0.166px;">Brooklyn cardigan shoreditch, kale chips blue</div>
<div class="t" style="left:381.0px;top:440.76px;font-size:10.5px;line-height:12px;letter-spacing:0.324px;">bottle sartorial bitters brunch retro art party.</div>
<div class="t" style="left:381.0px;top:466.36px;font-size:10.5px;line-height:12px;letter-spacing:0.014px;font-weight:bold;">Timeline</div>
<div class="t" style="left:381.0px;top:479.76px;font-size:10.5px;line-height:12px;letter-spacing:0.145px;">March 31 2017 to June 30th 2017</div>
<div class="t" style="left:381.0px;top:492.66px;font-size:10.5px;line-height:12px;letter-spacing:0.306px;font-style:italic;">89 days remaining</div>
<div class="t" style="left:381.0px;top:518.36px;font-size:10.5px;line-height:12px;letter-spacing:-0.526px;font-weight:bold;">Why?</div>
<div class="t" style="left:381.0px;top:531.66px;font-size:10.5px;line-height:12px;letter-spacing:0.236px;">Craft beer fixie photo booth.</div>
<div class="abs" style="left:562.2px;top:520.9px;width:60.2px;height:18.6px;background:#fff;border:1.5px solid #050505;box-shadow:3px 3px 0 #050505;"></div>
<div class="t" style="left:571.0px;top:525.74px;font-size:10px;line-height:12px;letter-spacing:0.712px;font-family:'Liberation Sans',sans-serif;">WIZARD</div>
<svg class="abs" style="left:613.6px;top:529.4px" width="14" height="14" viewBox="0 0 14 14"><circle cx="7" cy="7" r="6.3" fill="#fff" fill-opacity=".6"/><path d="M4.6 3.4 L10.8 3 L10.4 9.2 L8.6 7.5 L5.4 10.8 L3.2 8.6 L6.4 5.3 Z" fill="#e8868e"/></svg>
<div class="abs" style="left:373.3px;top:553.5px;width:261.6px;height:1.8px;background:#111;"></div>
<div class="abs" style="left:373.3px;top:555.5px;width:261.6px;height:38.0px;background:#cecece;"></div>
<div class="t" style="left:403.4px;top:560.96px;font-size:10.5px;line-height:12px;letter-spacing:0.120px;"><b>Milestone:</b> Sustainable kogi butcher</div>
<div class="t" style="left:403.4px;top:574.36px;font-size:10.5px;line-height:12px;letter-spacing:0.181px;">letterpress, swag raw denim chillwave tousled</div>
<div class="t" style="left:386.0px;top:568.13px;font-size:10px;line-height:12px;color:#555;">1</div>
<div class="abs" style="left:373.3px;top:593.5px;width:261.6px;height:1.8px;background:#111;"></div>
<svg class="abs" style="left:379.8px;top:603.5px;overflow:visible" width="20" height="18"><path d="M13.4 0.8 H4.6 A3.8 3.8 0 0 0 0.8 4.6 V11.4 A3.8 3.8 0 0 0 4.6 15.2 H11.0 A3.8 3.8 0 0 0 14.8 11.4 V9.4" fill="#fff" stroke="#0d0d0d" stroke-width="1.6" stroke-linecap="round"/><path d="M4 7 L8.5 11.9 L17.1 2.2" fill="none" stroke="#0a0a0a" stroke-width="3.1" stroke-linejoin="miter"/></svg>
<div class="abs" style="left:403.4px;top:600px;width:226px;height:24px;overflow:hidden"><div class="t" style="left:0.0px;top:6.16px;font-size:10.5px;line-height:12px;letter-spacing:.17px;">Brooklyn cardigan shoreditch, kale chips blue bottle</div>
</div>
<div class="abs" style="left:373.3px;top:628.7px;width:261.6px;height:1.8px;background:#111;"></div>
<svg class="abs" style="left:379.8px;top:641.4px;overflow:visible" width="20" height="18"><rect x="0.8" y="0.8" width="14.0" height="14.4" rx="3.8" fill="#fff" stroke="#0d0d0d" stroke-width="1.6"/></svg>
<div class="t" style="left:403.4px;top:637.56px;font-size:10.5px;line-height:12px;letter-spacing:0.306px;">Craft beer fixie photo booth, deep v squid</div>
<div class="t" style="left:403.4px;top:650.86px;font-size:10.5px;line-height:12px;letter-spacing:0.204px;">flannel sustainable. Tilde pour-over tousled</div>
<div class="abs" style="left:373.3px;top:669.7px;width:261.6px;height:1.8px;background:#111;"></div>
<svg class="abs" style="left:379.8px;top:688.2px;overflow:visible" width="20" height="18"><rect x="0.8" y="0.8" width="14.0" height="14.4" rx="3.8" fill="#fff" stroke="#0d0d0d" stroke-width="1.6"/></svg>
<div class="t" style="left:404.4px;top:677.56px;font-size:10.5px;line-height:12px;letter-spacing:0.223px;">Church-key sustainable succulents</div>
<div class="t" style="left:404.4px;top:690.86px;font-size:10.5px;line-height:12px;letter-spacing:0.262px;">polaroid slow-carb tote bag gastropub.</div>
<div class="t" style="left:404.4px;top:703.96px;font-size:10.5px;line-height:12px;letter-spacing:0.190px;">Activated charcoal fap glossier, shoreditch</div>
<svg class="abs" style="left:625.7px;top:708.4px" width="14" height="14" viewBox="0 0 14 14"><circle cx="7" cy="7" r="6.3" fill="#fff" fill-opacity=".6"/><path d="M4.6 3.4 L10.8 3 L10.4 9.2 L8.6 7.5 L5.4 10.8 L3.2 8.6 L6.4 5.3 Z" fill="#e8868e"/></svg>
<div class="abs" style="left:373.3px;top:720.7px;width:261.6px;height:1.8px;background:#111;"></div>
<div class="abs" style="left:373.3px;top:722.7px;width:261.6px;height:38.6px;background:#cecece;"></div>
<div class="t" style="left:403.4px;top:729.36px;font-size:10.5px;line-height:12px;letter-spacing:0.152px;"><b>Milestone:</b> Bushwick ethical ramps woke</div>
<div class="t" style="left:403.4px;top:742.66px;font-size:10.5px;line-height:12px;letter-spacing:0.296px;">flexitarian 90's prism</div>
<div class="t" style="left:384.6px;top:736.13px;font-size:10px;line-height:12px;color:#555;">2</div>
<div class="abs" style="left:373.3px;top:761.4px;width:261.6px;height:1.8px;background:#111;"></div>
<svg class="abs" style="left:379.8px;top:772.3px;overflow:visible" width="20" height="18"><path d="M13.4 0.8 H4.6 A3.8 3.8 0 0 0 0.8 4.6 V11.4 A3.8 3.8 0 0 0 4.6 15.2 H11.0 A3.8 3.8 0 0 0 14.8 11.4 V9.4" fill="#fff" stroke="#0d0d0d" stroke-width="1.6" stroke-linecap="round"/><path d="M4 7 L8.5 11.9 L17.1 2.2" fill="none" stroke="#0a0a0a" stroke-width="3.1" stroke-linejoin="miter"/></svg>
<div class="abs" style="left:403.4px;top:768px;width:226px;height:24px;overflow:hidden"><div class="t" style="left:0.0px;top:6.46px;font-size:10.5px;line-height:12px;letter-spacing:.17px;">Brooklyn cardigan shoreditch, kale chips blue bottle</div>
</div>
<div class="abs" style="left:373.3px;top:797.7px;width:261.6px;height:1.8px;background:#111;"></div>
<div class="abs" style="left:373.3px;top:800px;width:261.6px;height:29.6px;overflow:hidden"><div class="abs" style="left:-373.3px;top:-800px"><svg class="abs" style="left:378.2px;top:810.6px;overflow:visible" width="20" height="18"><path d="M13.4 0.8 H4.6 A3.8 3.8 0 0 0 0.8 4.6 V11.4 A3.8 3.8 0 0 0 4.6 15.2 H11.0 A3.8 3.8 0 0 0 14.8 11.4 V9.4" fill="#fff" stroke="#0d0d0d" stroke-width="1.6" stroke-linecap="round"/><path d="M4 7 L8.5 11.9 L17.1 2.2" fill="none" stroke="#0a0a0a" stroke-width="3.1" stroke-linejoin="miter"/></svg>
<div class="t" style="left:403.4px;top:806.26px;font-size:10.5px;line-height:12px;letter-spacing:0.306px;">Craft beer fixie photo booth, deep v squid</div>
<div class="t" style="left:403.4px;top:819.56px;font-size:10.5px;line-height:12px;letter-spacing:0.204px;">flannel sustainable. Tilde pour-over tousled</div>
</div></div>
<svg class="abs" style="left:624.7px;top:821.2px" width="14" height="14" viewBox="0 0 14 14"><circle cx="7" cy="7" r="6.3" fill="#fff" fill-opacity=".6"/><path d="M4.6 3.4 L10.8 3 L10.4 9.2 L8.6 7.5 L5.4 10.8 L3.2 8.6 L6.4 5.3 Z" fill="#e8868e"/></svg>
<svg class="abs" style="left:736.7px;top:278px;overflow:visible" width="322" height="640" viewBox="344 278 322 640"><rect x="345.2" y="358.3" width="5" height="23.5" rx="1.2" fill="#050505"/><rect x="345.2" y="404.5" width="5" height="43.5" rx="1.2" fill="#050505"/><rect x="345.2" y="453.2" width="5" height="42.8" rx="1.2" fill="#050505"/><rect x="656" y="404.5" width="5.2" height="42.5" rx="1.2" fill="#050505"/><path fill-rule="evenodd" d="M386 285.8 H622.4 A33.4 33.4 0 0 1 655.8 319.2 V875.2 A33.4 33.4 0 0 1 622.4 908.6 H386 A34.4 33.4 0 0 1 351.6 875.2 V319.2 A34.4 33.4 0 0 1 386 285.8 Z M370.5 358.5 V831.5 H638 V358.5 Z" fill="#c4c4c4" stroke="none"/><path d="M386 285.8 H622.4 A33.4 33.4 0 0 1 655.8 319.2 V875.2 A33.4 33.4 0 0 1 622.4 908.6 H386 A34.4 33.4 0 0 1 351.6 875.2 V319.2 A34.4 33.4 0 0 1 386 285.8 Z" fill="none" stroke="#050505" stroke-width="5.9"/><path fill-rule="evenodd" d="M367.5 356.8 H640.8 V833.4 H367.5 Z M373.3 360 V829.6 H634.9 V360 Z" fill="#050505"/><circle cx="504.4" cy="306.6" r="3.3" fill="#e9e9e9" stroke="#050505" stroke-width="3.2"/><circle cx="462.1" cy="324.5" r="4.5" fill="#e9e9e9" stroke="#050505" stroke-width="3.5"/><rect x="484.8" y="322" width="39.6" height="5" rx="2.5" fill="#e9e9e9" stroke="#050505" stroke-width="3"/><circle cx="504.7" cy="874.7" r="21.6" fill="#c4c4c4" stroke="#050505" stroke-width="3.6"/></svg>
<div class="abs" style="left:766.0px;top:360.0px;width:261.6px;height:11.0px;background:#dfe6ea;"></div>
<div class="t ar" style="left:767.3px;top:359px;font-size:8px;line-height:11px;letter-spacing:.1px"><span style="letter-spacing:-1.55px;font-size:10.5px;line-height:11px;vertical-align:-.4px">●●●○○</span>&nbsp; ABC</div>
<div class="t ar" style="left:877.7px;top:359px;font-size:8px;line-height:11px;letter-spacing:.05px;word-spacing:-1.2px">04:21 PM</div>
<svg class="abs" style="left:1008.2px;top:360.5px" width="14" height="10"><rect x="1" y="1.6" width="10" height="6.8" rx="1.2" fill="none" stroke="#111" stroke-width="1.3"/><rect x="2.6" y="3.2" width="5.6" height="3.6" fill="#111"/><path d="M11.6 3.4 Q13 5 11.6 6.6 Z" fill="#111" stroke="#111" stroke-width=".8"/></svg>
<div class="abs" style="left:766.0px;top:371.0px;width:261.6px;height:33.2px;background:#878c9b;"></div>
<svg class="abs" style="left:811.1px;top:385.0px" width="16" height="16" viewBox="0 0 16 16"><circle cx="8" cy="8" r="6.9" fill="#fff" fill-opacity=".66"/><path d="M6.4 5.2 L10.4 5 L10.2 9 L9 7.9 L6.6 12.4 L4.8 10.6 L7.6 6.3 Z" fill="#e8868e" fill-opacity=".55"/></svg>
<svg class="abs" style="left:904.1px;top:385.0px" width="16" height="16" viewBox="0 0 16 16"><circle cx="8" cy="8" r="6.9" fill="#fff" fill-opacity=".66"/><path d="M6.4 5.2 L10.4 5 L10.2 9 L9 7.9 L6.6 12.4 L4.8 10.6 L7.6 6.3 Z" fill="#e8868e" fill-opacity=".55"/></svg>
<svg class="abs" style="left:1007.1px;top:385.0px" width="16" height="16" viewBox="0 0 16 16"><circle cx="8" cy="8" r="6.9" fill="#fff" fill-opacity=".66"/><path d="M6.4 5.2 L10.4 5 L10.2 9 L9 7.9 L6.6 12.4 L4.8 10.6 L7.6 6.3 Z" fill="#e8868e" fill-opacity=".55"/></svg>
<div class="t" style="left:774.4px;top:379.95px;font-size:14px;line-height:16px;letter-spacing:0.239px;font-family:'Liberation Sans',sans-serif;color:#0d0d0d;">GOALS</div>
<div class="t" style="left:874.0px;top:379.95px;font-size:14px;line-height:16px;letter-spacing:-0.991px;font-weight:bold;font-family:'Liberation Sans',sans-serif;color:#0d0d0d;">TODAY</div>
<svg class="abs" style="left:875.7px;top:396px" width="43" height="6"><path d="M1 2.4 Q20 4.4 41 3" fill="none" stroke="#111" stroke-width="1.7" stroke-linecap="round"/></svg>
<div class="t" style="left:962.1px;top:379.95px;font-size:14px;line-height:16px;letter-spacing:0.654px;font-family:'Liberation Sans',sans-serif;color:#0d0d0d;">REVIEW</div>
<div class="abs" style="left:766.0px;top:404.2px;width:261.6px;height:425.4px;background:#fff;"></div>
<div class="abs" style="left:766.0px;top:404.2px;width:261.6px;height:45.0px;background:#dcdcdc;"></div>
<div class="t" style="left:773.4px;top:414.06px;font-size:10.5px;line-height:12px;letter-spacing:0.152px;"><b>Day Goal:</b> Move forward with my business idea</div>
<div class="t" style="left:773.4px;top:426.76px;font-size:10.5px;line-height:12px;letter-spacing:0.275px;">and get through the day in one piece</div>
<div class="abs" style="left:766.0px;top:449.3px;width:261.6px;height:1.8px;background:#111;"></div>
<svg class="abs" style="left:778.2px;top:467.6px;overflow:visible" width="20" height="18"><path d="M13.4 0.8 H4.6 A3.8 3.8 0 0 0 0.8 4.6 V11.4 A3.8 3.8 0 0 0 4.6 15.2 H11.0 A3.8 3.8 0 0 0 14.8 11.4 V9.4" fill="#fff" stroke="#0d0d0d" stroke-width="1.6" stroke-linecap="round"/><path d="M4 7 L8.5 11.9 L17.1 2.2" fill="none" stroke="#0a0a0a" stroke-width="3.1" stroke-linejoin="miter"/></svg>
<div class="t" style="left:810.7px;top:460.66px;font-size:10.5px;line-height:12px;letter-spacing:0.186px;">Franzen mlkshk farm-to-table pour-over</div>
<div class="t" style="left:810.7px;top:477.66px;font-size:10.5px;line-height:12px;letter-spacing:0.263px;color:#6a6a6a;">Completed today at 14:00</div>
<div class="abs" style="left:766.0px;top:501.9px;width:261.6px;height:1.8px;background:#111;"></div>
<svg class="abs" style="left:778.8px;top:522.2px;overflow:visible" width="20" height="18"><rect x="0.8" y="0.8" width="14.0" height="14.4" rx="3.8" fill="#fff" stroke="#0d0d0d" stroke-width="1.6"/></svg>
<div class="t" style="left:810.0px;top:515.66px;font-size:10.5px;line-height:12px;letter-spacing:0.254px;">Meeting with post-ironic sriracha whatever</div>
<div class="t" style="left:810.7px;top:532.36px;font-size:10.5px;line-height:12px;letter-spacing:-0.516px;color:#6a6a6a;">At 13:15</div>
<div class="abs" style="left:766.0px;top:557.5px;width:261.6px;height:1.8px;background:#111;"></div>
<svg class="abs" style="left:779.1px;top:579.2px;overflow:visible" width="20" height="18"><rect x="0.8" y="0.8" width="14.0" height="14.4" rx="3.8" fill="#fff" stroke="#0d0d0d" stroke-width="1.6"/></svg>
<div class="t" style="left:810.7px;top:572.36px;font-size:10.5px;line-height:12px;letter-spacing:0.310px;">Vinegar yr man braid freegan food truck</div>
<div class="t" style="left:810.7px;top:589.06px;font-size:10.5px;line-height:12px;letter-spacing:0.089px;color:#6a6a6a;">14:00 to 15:00</div>
<div class="abs" style="left:766.0px;top:613.9px;width:261.6px;height:1.8px;background:#111;"></div>
<svg class="abs" style="left:779.1px;top:633.8px;overflow:visible" width="20" height="18"><rect x="0.8" y="0.8" width="14.0" height="14.4" rx="3.8" fill="#fff" stroke="#0d0d0d" stroke-width="1.6"/></svg>
<div class="t" style="left:810.7px;top:627.06px;font-size:10.5px;line-height:12px;letter-spacing:0.177px;">Habit: Meditate</div>
<div class="t" style="left:810.7px;top:644.06px;font-size:10.5px;line-height:12px;letter-spacing:0.302px;color:#6a6a6a;">Last time: yesterday</div>
<div class="abs" style="left:766.0px;top:668.9px;width:261.6px;height:1.8px;background:#111;"></div>
<svg class="abs" style="left:779.1px;top:689.8px;overflow:visible" width="20" height="18"><rect x="0.8" y="0.8" width="14.0" height="14.4" rx="3.8" fill="#fff" stroke="#0d0d0d" stroke-width="1.6"/></svg>
<div class="abs" style="left:810.7px;top:688.0px;width:204.8px;height:20.5px;background:#fff;border:2px solid #111;"></div>
<div class="t" style="left:817.0px;top:692.36px;font-size:10.5px;line-height:12px;letter-spacing:0.335px;">Type a new task for today</div>
<div class="abs" style="left:766.0px;top:724.7px;width:261.6px;height:1.8px;background:#111;"></div>
<svg class="abs" style="left:1116.0px;top:278px;overflow:visible" width="322" height="640" viewBox="344 278 322 640"><rect x="345.2" y="358.3" width="5" height="23.5" rx="1.2" fill="#050505"/><rect x="345.2" y="404.5" width="5" height="43.5" rx="1.2" fill="#050505"/><rect x="345.2" y="453.2" width="5" height="42.8" rx="1.2" fill="#050505"/><rect x="656" y="404.5" width="5.2" height="42.5" rx="1.2" fill="#050505"/><path fill-rule="evenodd" d="M386 285.8 H622.4 A33.4 33.4 0 0 1 655.8 319.2 V875.2 A33.4 33.4 0 0 1 622.4 908.6 H386 A34.4 33.4 0 0 1 351.6 875.2 V319.2 A34.4 33.4 0 0 1 386 285.8 Z M370.5 358.5 V831.5 H638 V358.5 Z" fill="#c4c4c4" stroke="none"/><path d="M386 285.8 H622.4 A33.4 33.4 0 0 1 655.8 319.2 V875.2 A33.4 33.4 0 0 1 622.4 908.6 H386 A34.4 33.4 0 0 1 351.6 875.2 V319.2 A34.4 33.4 0 0 1 386 285.8 Z" fill="none" stroke="#050505" stroke-width="5.9"/><path fill-rule="evenodd" d="M367.5 356.8 H640.8 V833.4 H367.5 Z M373.3 360 V829.6 H634.9 V360 Z" fill="#050505"/><circle cx="504.4" cy="306.6" r="3.3" fill="#e9e9e9" stroke="#050505" stroke-width="3.2"/><circle cx="462.1" cy="324.5" r="4.5" fill="#e9e9e9" stroke="#050505" stroke-width="3.5"/><rect x="484.8" y="322" width="39.6" height="5" rx="2.5" fill="#e9e9e9" stroke="#050505" stroke-width="3"/><circle cx="504.7" cy="874.7" r="21.6" fill="#c4c4c4" stroke="#050505" stroke-width="3.6"/></svg>
<div class="abs" style="left:1145.3px;top:360.0px;width:261.6px;height:11.0px;background:#dfe6ea;"></div>
<div class="t ar" style="left:1146.6px;top:359px;font-size:8px;line-height:11px;letter-spacing:.1px"><span style="letter-spacing:-1.55px;font-size:10.5px;line-height:11px;vertical-align:-.4px">●●●○○</span>&nbsp; ABC</div>
<div class="t ar" style="left:1257.0px;top:359px;font-size:8px;line-height:11px;letter-spacing:.05px;word-spacing:-1.2px">04:21 PM</div>
<svg class="abs" style="left:1387.5px;top:360.5px" width="14" height="10"><rect x="1" y="1.6" width="10" height="6.8" rx="1.2" fill="none" stroke="#111" stroke-width="1.3"/><rect x="2.6" y="3.2" width="5.6" height="3.6" fill="#111"/><path d="M11.6 3.4 Q13 5 11.6 6.6 Z" fill="#111" stroke="#111" stroke-width=".8"/></svg>
<div class="abs" style="left:1145.3px;top:371.0px;width:261.6px;height:33.2px;background:#878c9b;"></div>
<svg class="abs" style="left:1190.4px;top:385.0px" width="16" height="16" viewBox="0 0 16 16"><circle cx="8" cy="8" r="6.9" fill="#fff" fill-opacity=".66"/><path d="M6.4 5.2 L10.4 5 L10.2 9 L9 7.9 L6.6 12.4 L4.8 10.6 L7.6 6.3 Z" fill="#e8868e" fill-opacity=".55"/></svg>
<svg class="abs" style="left:1283.4px;top:385.0px" width="16" height="16" viewBox="0 0 16 16"><circle cx="8" cy="8" r="6.9" fill="#fff" fill-opacity=".66"/><path d="M6.4 5.2 L10.4 5 L10.2 9 L9 7.9 L6.6 12.4 L4.8 10.6 L7.6 6.3 Z" fill="#e8868e" fill-opacity=".55"/></svg>
<svg class="abs" style="left:1386.4px;top:385.0px" width="16" height="16" viewBox="0 0 16 16"><circle cx="8" cy="8" r="6.9" fill="#fff" fill-opacity=".66"/><path d="M6.4 5.2 L10.4 5 L10.2 9 L9 7.9 L6.6 12.4 L4.8 10.6 L7.6 6.3 Z" fill="#e8868e" fill-opacity=".55"/></svg>
<div class="t" style="left:1153.7px;top:379.95px;font-size:14px;line-height:16px;letter-spacing:0.239px;font-family:'Liberation Sans',sans-serif;color:#0d0d0d;">GOALS</div>
<div class="t" style="left:1253.6px;top:379.95px;font-size:14px;line-height:16px;letter-spacing:-0.909px;font-family:'Liberation Sans',sans-serif;color:#0d0d0d;">TODAY</div>
<div class="t" style="left:1341.1px;top:379.95px;font-size:14px;line-height:16px;letter-spacing:0.694px;font-weight:bold;font-family:'Liberation Sans',sans-serif;color:#0d0d0d;">REVIEW</div>
<svg class="abs" style="left:1349.5px;top:396px" width="44" height="6"><path d="M1 2.4 Q20 4.4 42 3" fill="none" stroke="#111" stroke-width="1.7" stroke-linecap="round"/></svg>
<div class="abs" style="left:1145.3px;top:404.2px;width:261.6px;height:425.4px;background:rgba(255,255,255,.4);"></div>
<div class="t" style="left:1171.9px;top:414.06px;font-size:10.5px;line-height:12px;letter-spacing:0.199px;">Create a review for:</div>
<div class="abs" style="left:1283.3px;top:410.4px;width:48.3px;height:17.6px;background:#fff;border:1.5px solid #050505;box-shadow:3px 3px 0 #050505;"></div>
<div class="t" style="left:1294.4px;top:414.36px;font-size:10.5px;line-height:12px;letter-spacing:-0.205px;">Today</div>
<svg class="abs" style="left:1323.4px;top:419.0px" width="14" height="14" viewBox="0 0 14 14"><circle cx="7" cy="7" r="6.3" fill="#fff" fill-opacity=".6"/><path d="M4.6 3.4 L10.8 3 L10.4 9.2 L8.6 7.5 L5.4 10.8 L3.2 8.6 L6.4 5.3 Z" fill="#e8868e"/></svg>
<div class="abs" style="left:1347.7px;top:410.4px;width:48.3px;height:17.6px;background:#fff;border:1.5px solid #050505;box-shadow:3px 3px 0 #050505;"></div>
<div class="t" style="left:1359.2px;top:414.36px;font-size:10.5px;line-height:12px;letter-spacing:-0.217px;">Week</div>
<svg class="abs" style="left:1387.6px;top:419.0px" width="14" height="14" viewBox="0 0 14 14"><circle cx="7" cy="7" r="6.3" fill="#fff" fill-opacity=".6"/><path d="M4.6 3.4 L10.8 3 L10.4 9.2 L8.6 7.5 L5.4 10.8 L3.2 8.6 L6.4 5.3 Z" fill="#e8868e"/></svg>
<div class="abs" style="left:1145.3px;top:436.8px;width:261.6px;height:2.0px;background:#111;"></div>
<div class="t" style="left:1154.0px;top:447.56px;font-size:10.5px;line-height:12px;letter-spacing:0.248px;">Last Monday</div>
<div class="t" style="left:1154.0px;top:464.96px;font-size:10.5px;line-height:12px;letter-spacing:0.417px;color:#6a6a6a;">Completed 3/5</div>
<svg class="abs" style="left:1387.3px;top:456.8px" width="8" height="12"><path d="M1.2 1 L6.4 5.7 L1.2 10.6" fill="none" stroke="#111" stroke-width="1.5"/></svg>
<div class="abs" style="left:1145.3px;top:487.8px;width:261.6px;height:2.0px;background:#111;"></div>
<div class="t" style="left:1154.0px;top:497.56px;font-size:10.5px;line-height:12px;letter-spacing:0.298px;">Yesterday</div>
<div class="t" style="left:1154.0px;top:515.16px;font-size:10.5px;line-height:12px;letter-spacing:0.417px;color:#6a6a6a;">Completed 5/5</div>
<svg class="abs" style="left:1387.3px;top:508.4px" width="8" height="12"><path d="M1.2 1 L6.4 5.7 L1.2 10.6" fill="none" stroke="#111" stroke-width="1.5"/></svg>
<div class="abs" style="left:1145.3px;top:537.7px;width:261.6px;height:2.0px;background:#111;"></div>
<svg class="abs" style="left:1394.5px;top:530.6px" width="14" height="14" viewBox="0 0 14 14"><circle cx="7" cy="7" r="6.3" fill="#fff" fill-opacity=".6"/><path d="M4.6 3.4 L10.8 3 L10.4 9.2 L8.6 7.5 L5.4 10.8 L3.2 8.6 L6.4 5.3 Z" fill="#e8868e"/></svg>
<div class="t" style="left:1154.5px;top:547.36px;font-size:10.5px;line-height:12px;letter-spacing:-0.014px;font-weight:bold;">Week Review</div>
<div class="t" style="left:1154.0px;top:565.36px;font-size:10.5px;line-height:12px;letter-spacing:0.065px;color:#6a6a6a;">01-01-2017 to 07-01-2017</div>
<svg class="abs" style="left:1387.3px;top:559.0px" width="8" height="12"><path d="M1.2 1 L6.4 5.7 L1.2 10.6" fill="none" stroke="#111" stroke-width="1.5"/></svg>
<svg class="abs" style="left:1389.5px;top:567.5px" width="14" height="14" viewBox="0 0 14 14"><circle cx="7" cy="7" r="6.3" fill="#fff" fill-opacity=".6"/><path d="M4.6 3.4 L10.8 3 L10.4 9.2 L8.6 7.5 L5.4 10.8 L3.2 8.6 L6.4 5.3 Z" fill="#e8868e"/></svg>
<div class="abs" style="left:1145.3px;top:587.6px;width:261.6px;height:17.6px;background:#6c6c6c;border-top:2px solid #111;border-bottom:2.4px solid #111;"></div>
<svg class="abs" style="left:1155.6px;top:621.8px;overflow:visible" width="20" height="18"><path d="M13.4 0.8 H4.6 A3.8 3.8 0 0 0 0.8 4.6 V11.4 A3.8 3.8 0 0 0 4.6 15.2 H11.0 A3.8 3.8 0 0 0 14.8 11.4 V9.4" fill="none" stroke="#cdcdcd" stroke-width="1.6" stroke-linecap="round"/><path d="M4 7 L8.5 11.9 L17.1 2.2" fill="none" stroke="#b9b9b9" stroke-width="3.1" stroke-linejoin="miter"/></svg>
<div class="t" style="left:1188.3px;top:615.16px;font-size:10.5px;line-height:12px;letter-spacing:0.184px;">Franzen mlkshk farm-to-table pour-over</div>
<div class="t" style="left:1188.3px;top:632.56px;font-size:10.5px;line-height:12px;letter-spacing:0.237px;color:#6a6a6a;">Completed today at 14:00</div>
<div class="abs" style="left:1145.3px;top:654.6px;width:261.6px;height:2.0px;background:#111;"></div>
<svg class="abs" style="left:1155.6px;top:671.5px;overflow:visible" width="20" height="18"><path d="M13.4 0.8 H4.6 A3.8 3.8 0 0 0 0.8 4.6 V11.4 A3.8 3.8 0 0 0 4.6 15.2 H11.0 A3.8 3.8 0 0 0 14.8 11.4 V9.4" fill="none" stroke="#cdcdcd" stroke-width="1.6" stroke-linecap="round"/><path d="M4 7 L8.5 11.9 L17.1 2.2" fill="none" stroke="#b9b9b9" stroke-width="3.1" stroke-linejoin="miter"/></svg>
<div class="t" style="left:1188.3px;top:665.36px;font-size:10.5px;line-height:12px;letter-spacing:0.184px;">Franzen mlkshk farm-to-table pour-over</div>
<div class="t" style="left:1188.3px;top:682.56px;font-size:10.5px;line-height:12px;letter-spacing:0.237px;color:#6a6a6a;">Completed today at 14:00</div>
<div class="abs" style="left:1145.3px;top:705.3px;width:261.6px;height:2.0px;background:#111;"></div>
<svg class="abs" style="left:1155.6px;top:721.0px;overflow:visible" width="20" height="18"><path d="M13.4 0.8 H4.6 A3.8 3.8 0 0 0 0.8 4.6 V11.4 A3.8 3.8 0 0 0 4.6 15.2 H11.0 A3.8 3.8 0 0 0 14.8 11.4 V9.4" fill="none" stroke="#cdcdcd" stroke-width="1.6" stroke-linecap="round"/><path d="M4 7 L8.5 11.9 L17.1 2.2" fill="none" stroke="#b9b9b9" stroke-width="3.1" stroke-linejoin="miter"/></svg>
<div class="t" style="left:1188.3px;top:714.56px;font-size:10.5px;line-height:12px;letter-spacing:0.184px;">Franzen mlkshk farm-to-table pour-over</div>
<div class="t" style="left:1188.3px;top:731.96px;font-size:10.5px;line-height:12px;letter-spacing:0.237px;color:#6a6a6a;">Completed today at 14:00</div>
<div class="abs" style="left:1145.3px;top:754.5px;width:261.6px;height:2.0px;background:#111;"></div>
<svg class="abs" style="left:1155.6px;top:771.1px;overflow:visible" width="20" height="18"><path d="M13.4 0.8 H4.6 A3.8 3.8 0 0 0 0.8 4.6 V11.4 A3.8 3.8 0 0 0 4.6 15.2 H11.0 A3.8 3.8 0 0 0 14.8 11.4 V9.4" fill="none" stroke="#cdcdcd" stroke-width="1.6" stroke-linecap="round"/><path d="M4 7 L8.5 11.9 L17.1 2.2" fill="none" stroke="#b9b9b9" stroke-width="3.1" stroke-linejoin="miter"/></svg>
<div class="t" style="left:1188.3px;top:764.16px;font-size:10.5px;line-height:12px;letter-spacing:0.177px;">Habit: Meditate</div>
<div class="t" style="left:1188.3px;top:781.96px;font-size:10.5px;line-height:12px;letter-spacing:0.237px;color:#6a6a6a;">Completed today at 14:00</div>
<div class="abs" style="left:1145.3px;top:804.7px;width:261.6px;height:2.0px;background:#111;"></div>
<div class="abs" style="left:1145.3px;top:807px;width:261.6px;height:22.6px;overflow:hidden"><div class="abs" style="left:-1145.3px;top:-807px"><svg class="abs" style="left:1155.6px;top:819.5px;overflow:visible" width="20" height="18"><path d="M13.4 0.8 H4.6 A3.8 3.8 0 0 0 0.8 4.6 V11.4 A3.8 3.8 0 0 0 4.6 15.2 H11.0 A3.8 3.8 0 0 0 14.8 11.4 V9.4" fill="none" stroke="#cdcdcd" stroke-width="1.6" stroke-linecap="round"/><path d="M4 7 L8.5 11.9 L17.1 2.2" fill="none" stroke="#b9b9b9" stroke-width="3.1" stroke-linejoin="miter"/></svg>
<div class="t" style="left:1188.3px;top:812.86px;font-size:10.5px;line-height:12px;letter-spacing:0.184px;">Franzen mlkshk farm-to-table pour-over</div>
</div></div>

</div>
<svg class="abs" style="left:0;top:0;pointer-events:none" width="1600" height="975" viewBox="0 0 1600 975"><rect x="1585" y="222" width="15" height="753" fill="#ededed"/><rect x="215" y="959" width="1385" height="16" fill="#ededed"/><rect x="1588" y="296" width="8.2" height="419" rx="4.1" fill="#6e6e6e"/><path d="M1587.6 233.8 L1592.2 229.2 L1596.8 233.8 Z" fill="#666"/><path d="M1587.6 947.6 L1592.2 952.2 L1596.8 947.6 Z" fill="#666"/><rect x="232.8" y="963.4" width="998.4" height="8.2" rx="4.1" fill="#6e6e6e"/><path d="M225.8 962.6 L221 967.4 L225.8 972.2 Z" fill="#666"/><path d="M1572.6 962.6 L1577.4 967.4 L1572.6 972.2 Z" fill="#666"/></svg>

</body></html>
